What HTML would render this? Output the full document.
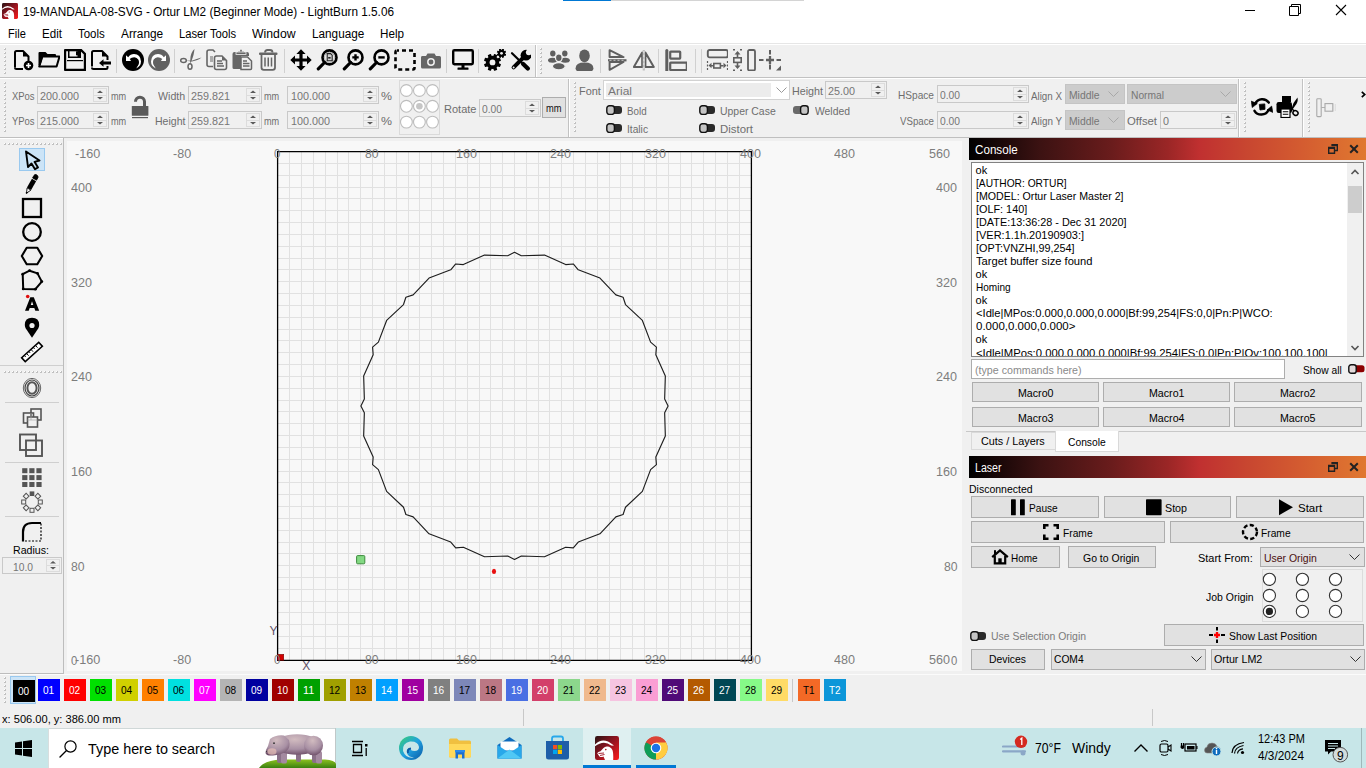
<!DOCTYPE html>
<html><head><meta charset="utf-8"><title>LightBurn</title><style>
*{margin:0;padding:0;box-sizing:border-box}
html,body{width:1366px;height:768px;overflow:hidden}
body{position:relative;background:#f0f0f0;font-family:"Liberation Sans",sans-serif;font-size:12px;color:#000}
.a{position:absolute;display:block}
.t{position:absolute;white-space:pre;line-height:1;transform-origin:0 0}
</style></head><body>
<div class="a" style="left:0px;top:0px;width:1366px;height:22px;background:#fff;"></div>
<div class="a" style="left:0px;top:22px;width:1366px;height:21px;background:#fff;"></div>
<div class="a" style="left:0px;top:43px;width:1366px;height:1px;background:#e6e6e6;"></div>
<div class="a" style="left:0px;top:44px;width:1366px;height:1px;background:#fff;"></div>
<div class="a" style="left:0px;top:45px;width:1366px;height:32px;background:#f0f0f0;"></div>
<div class="a" style="left:0px;top:77px;width:1366px;height:1px;background:#c2c2c2;"></div>
<div class="a" style="left:0px;top:78px;width:1366px;height:1px;background:#fff;"></div>
<div class="a" style="left:0px;top:79px;width:1366px;height:58px;background:#f0f0f0;"></div>
<div class="a" style="left:0px;top:137px;width:1366px;height:1px;background:#bfbfbf;"></div>
<div class="a" style="left:0px;top:138px;width:63px;height:1px;background:#fff;"></div>
<div class="a" style="left:67px;top:141px;width:895px;height:530px;background:#f8f8f8;"></div>
<div class="a" style="left:63px;top:138px;width:1px;height:536px;background:#bdbdbd;"></div>
<div class="a" style="left:0px;top:673px;width:64px;height:1px;background:#bdbdbd;"></div>
<div class="a" style="left:0px;top:674px;width:1366px;height:1px;background:#fbfbfb;"></div>
<div class="a" style="left:0px;top:728px;width:1366px;height:40px;background:#c7e6e8;"></div>
<svg class="a" style="left:2px;top:3px;" width="16" height="16" viewBox="0 0 24 24"><defs><linearGradient id="lg1" x1="0" y1="0" x2="1" y2="1"><stop offset="0" stop-color="#2a1414"/><stop offset="0.45" stop-color="#8a1420"/><stop offset="1" stop-color="#ff1a1a"/></linearGradient></defs>
<rect x="0" y="0" width="24" height="24" rx="2.2" fill="url(#lg1)"/>
<path d="M0 8.5 Q8 0.5 18 8.8 L18.8 9.8 L16.2 9.6 Q9 3.5 0 10.2 Z" fill="#fff"/>
<path d="M10 24 L8.5 20.5 Q6 21.5 4.5 20.5 L2.2 17.2 Q3 15.8 5.5 15.2 L8.5 12 Q10 10.2 12.5 10.5 Q16 10.8 17.6 14.5 Q18.5 17.5 18.2 24 Z" fill="#fff"/>
<path d="M3.5 17.5 L9 17 M5 19.5 L9.5 18.5" stroke="#a01020" stroke-width="0.9"/><circle cx="10.8" cy="13.6" r="0.8" fill="#a01020"/></svg>
<div class="t" style="left:23.00px;top:5.84px;font-size:12px;color:#000;transform:scaleX(0.9810);">19-MANDALA-08-SVG - Ortur LM2 (Beginner Mode) - LightBurn 1.5.06</div>
<div class="a" style="left:563px;top:0px;width:48px;height:1px;background:#0078d4;"></div>
<div class="a" style="left:611px;top:0px;width:193px;height:1px;background:#d4d4d4;"></div>
<div class="a" style="left:1245px;top:10px;width:10px;height:1px;background:#000;"></div>
<svg class="a" style="left:1289px;top:4px;" width="12" height="12" viewBox="0 0 12 12"><path d="M0.5 2.5 H9.5 V11.5 H0.5 Z M2.5 2.5 V0.5 H11.5 V9.5 H9.5" fill="none" stroke="#000" stroke-width="1"/></svg>
<svg class="a" style="left:1335px;top:4px;" width="12" height="12" viewBox="0 0 12 12"><path d="M1 1 L11 11 M11 1 L1 11" stroke="#000" stroke-width="1.1"/></svg>
<div class="t" style="left:8.30px;top:28.24px;font-size:12px;color:#000;transform:scaleX(0.9202);">File</div>
<div class="t" style="left:41.50px;top:28.24px;font-size:12px;color:#000;transform:scaleX(0.9668);">Edit</div>
<div class="t" style="left:77.80px;top:28.24px;font-size:12px;color:#000;transform:scaleX(0.9566);">Tools</div>
<div class="t" style="left:120.80px;top:28.24px;font-size:12px;color:#000;transform:scaleX(0.9882);">Arrange</div>
<div class="t" style="left:179.00px;top:28.24px;font-size:12px;color:#000;transform:scaleX(0.9353);">Laser Tools</div>
<div class="t" style="left:252.20px;top:28.24px;font-size:12px;color:#000;transform:scaleX(1.0214);">Window</div>
<div class="t" style="left:312.10px;top:28.24px;font-size:12px;color:#000;transform:scaleX(0.9796);">Language</div>
<div class="t" style="left:380.40px;top:28.24px;font-size:12px;color:#000;transform:scaleX(0.9722);">Help</div>
<svg class="a" style="left:4px;top:48px;" width="2" height="26" viewBox="0 0 2 26"><rect x="0" y="0" width="2" height="2" fill="#c0c0c0"/><rect x="0" y="0" width="1" height="1" fill="#fff"/><rect x="0" y="4" width="2" height="2" fill="#c0c0c0"/><rect x="0" y="4" width="1" height="1" fill="#fff"/><rect x="0" y="8" width="2" height="2" fill="#c0c0c0"/><rect x="0" y="8" width="1" height="1" fill="#fff"/><rect x="0" y="12" width="2" height="2" fill="#c0c0c0"/><rect x="0" y="12" width="1" height="1" fill="#fff"/><rect x="0" y="16" width="2" height="2" fill="#c0c0c0"/><rect x="0" y="16" width="1" height="1" fill="#fff"/><rect x="0" y="20" width="2" height="2" fill="#c0c0c0"/><rect x="0" y="20" width="1" height="1" fill="#fff"/><rect x="0" y="24" width="2" height="2" fill="#c0c0c0"/><rect x="0" y="24" width="1" height="1" fill="#fff"/></svg>
<svg class="a" style="left:12px;top:49px;" width="22" height="22" viewBox="0 0 22 22"><path d="M3 18.5 V3.5 Q3 2 4.5 2 H11 L16.5 7.5 V12" fill="none" stroke="#000" stroke-width="2" stroke-linejoin="round"/>
<path d="M11 2 V7.5 H16.5 Z" fill="#000"/><path d="M3 18.5 Q3 20 4.5 20 H11" fill="none" stroke="#000" stroke-width="2"/>
<circle cx="16.5" cy="16.5" r="4.8" fill="#000"/><path d="M16.5 14 V19 M14 16.5 H19" stroke="#fff" stroke-width="1.6"/></svg>
<svg class="a" style="left:38px;top:49px;" width="22" height="22" viewBox="0 0 22 22"><path d="M0.5 4 Q0.5 3 1.5 3 H7.5 L9.5 5 H17 Q18 5 18 6 V7.5 H5 L2.5 16 H0.5 Z" fill="#000"/>
<path d="M4.3 7.6 H21.5 L18.6 17.5 H1.2 Z" fill="none" stroke="#000" stroke-width="2" stroke-linejoin="round"/></svg>
<svg class="a" style="left:64px;top:49px;" width="22" height="22" viewBox="0 0 22 22"><path d="M1 2 Q1 1 2 1 H17 L21 5 V21 H2 Q1 21 1 20 Z" fill="none" stroke="#000" stroke-width="2.4" stroke-linejoin="round"/>
<rect x="4" y="2" width="13" height="7" fill="#000"/><rect x="5.5" y="2.3" width="8" height="5.2" fill="#f0f0f0"/><rect x="12" y="2.3" width="2" height="4" fill="#000"/>
<rect x="3" y="11" width="16" height="1.2" fill="#000"/></svg>
<svg class="a" style="left:90px;top:49px;" width="22" height="22" viewBox="0 0 22 22"><path d="M2 17.5 V3.5 Q2 2 3.5 2 H12 L17.5 7.5 V11 M17.5 17 V18.5 Q17.5 20 16 20 H3.5 Q2 20 2 18.5" fill="none" stroke="#000" stroke-width="2" stroke-linejoin="round"/>
<path d="M12 2 V7.5 H17.5 Z" fill="#000"/><path d="M9 14 L13.5 10.2 V12.5 H21 V15.5 H13.5 V17.8 Z" fill="#000"/></svg>
<div class="a" style="left:116px;top:49px;width:1px;height:24px;background:#d0d0d0;"></div>
<svg class="a" style="left:122px;top:49px;" width="22" height="22" viewBox="0 0 22 22"><circle cx="11" cy="11" r="11" fill="#000"/><path d="M4 6.2 L4 12.1 L9.6 12.1 L7.6 10.1 Q9.6 8.2 12.2 8.2 Q16.4 8.6 16.8 13 Q16.8 16.6 14.2 19.6 Q19 16.8 19 12.5 Q18.6 5.4 12 5 Q8.4 5 6.2 8.3 Z" fill="#fff"/><circle cx="12.6" cy="13.4" r="4.3" fill="#000"/></svg>
<svg class="a" style="left:148px;top:49px;" width="22" height="22" viewBox="0 0 22 22"><circle cx="11" cy="11" r="11" fill="#616161"/><g transform="translate(22 0) scale(-1 1)"><path d="M4 6.2 L4 12.1 L9.6 12.1 L7.6 10.1 Q9.6 8.2 12.2 8.2 Q16.4 8.6 16.8 13 Q16.8 16.6 14.2 19.6 Q19 16.8 19 12.5 Q18.6 5.4 12 5 Q8.4 5 6.2 8.3 Z" fill="#fff"/><circle cx="12.6" cy="13.4" r="4.3" fill="#616161"/></g></svg>
<div class="a" style="left:174px;top:49px;width:1px;height:24px;background:#d0d0d0;"></div>
<svg class="a" style="left:180px;top:49px;" width="22" height="22" viewBox="0 0 22 22"><ellipse cx="3.5" cy="11.5" rx="2.8" ry="2" fill="none" stroke="#666" stroke-width="1.5"/><ellipse cx="10" cy="17.5" rx="2" ry="2.8" fill="none" stroke="#666" stroke-width="1.5"/>
<path d="M6 11.8 L12.5 11.5 C15 10.5 18 9.5 21.5 8.5 C19 11 16 11.5 12 12.5 Z" fill="#666"/><path d="M10 14.8 L10.5 8 C11 5 12 2 14.5 0 C14 4 13.5 7 11.5 12 Z" fill="#666"/></svg>
<svg class="a" style="left:206px;top:49px;" width="22" height="22" viewBox="0 0 22 22"><path d="M7 17.5 H3 Q1 17.5 1 15.5 V3 Q1 1 3 1 H7 L9 3" fill="none" stroke="#666" stroke-width="1.6"/><path d="M4 8 H7 M4 10 H7 M4 12 H7" stroke="#666" stroke-width="1.2"/>
<path d="M8.5 9 Q8.5 7 10.5 7 H16 L20.5 11.5 V18.5 Q20.5 20.5 18.5 20.5 H10.5 Q8.5 20.5 8.5 18.5 Z" fill="#f0f0f0" stroke="#666" stroke-width="1.6"/><path d="M16 7 V11.5 H20.5 Z" fill="#666"/><path d="M11 12 H16 M11 14.5 H17 M11 17 H18" stroke="#666" stroke-width="1.3"/></svg>
<svg class="a" style="left:232px;top:49px;" width="22" height="22" viewBox="0 0 22 22"><path d="M2 20 Q0.5 20 0.5 18.5 V5 Q0.5 3 2.5 3 H15 Q17 3 17 5 V7 H9 V20 Z" fill="#666"/><path d="M6 4 V2.5 H8 Q8 0.5 9 0.5 Q10 0.5 10 2.5 H12 V4 Z" fill="#666"/><rect x="4" y="3" width="10" height="2.5" fill="#666" stroke="#f0f0f0" stroke-width="0.8"/>
<path d="M9 8 H15.5 L19.5 12 V19.5 Q19.5 20.5 18.5 20.5 H9 Z" fill="#f0f0f0" stroke="#666" stroke-width="1.5"/><path d="M11 12 H15 M11 14.5 H17.5 M11 17 H17.5" stroke="#666" stroke-width="1.3"/></svg>
<svg class="a" style="left:259px;top:49px;" width="22" height="22" viewBox="0 0 22 22"><path d="M6 3.5 Q6 1 8.5 1 H11 Q13.5 1 13.5 3.5" fill="none" stroke="#666" stroke-width="1.8"/><rect x="0" y="3.5" width="18.5" height="2.5" rx="1" fill="#666"/>
<path d="M2.5 6 V18.5 Q2.5 20.8 4.8 20.8 H13.7 Q16 20.8 16 18.5 V6" fill="none" stroke="#666" stroke-width="1.8"/><path d="M6 8.5 V17.5 M9.25 8.5 V17.5 M12.5 8.5 V17.5" stroke="#666" stroke-width="1.5"/></svg>
<div class="a" style="left:284px;top:49px;width:1px;height:24px;background:#d0d0d0;"></div>
<svg class="a" style="left:290px;top:49px;" width="22" height="22" viewBox="0 0 22 22"><path d="M11 0.3 L15.6 5 H12.6 V9.4 H17 V6.4 L21.7 11 L17 15.6 V12.6 H12.6 V17 H15.6 L11 21.7 L6.4 17 H9.4 V12.6 H5 V15.6 L0.3 11 L5 6.4 V9.4 H9.4 V5 H6.4 Z" fill="#000"/></svg>
<svg class="a" style="left:316px;top:49px;" width="22" height="22" viewBox="0 0 22 22"><circle cx="13.5" cy="8.4" r="7" fill="none" stroke="#000" stroke-width="2.6"/><path d="M8.5 13.5 L2.3 19.8" stroke="#000" stroke-width="3.2" stroke-linecap="round"/><circle cx="13.5" cy="8.4" r="5" fill="none" stroke="#999" stroke-width="0.7"/><path d="M11.2 4.6 H14.6 L16.2 6.2 V11.8 H11.2 Z" fill="#d0d0d0" stroke="#222" stroke-width="1.1"/><rect x="12.2" y="8" width="2.4" height="1.6" fill="#222"/></svg>
<svg class="a" style="left:342px;top:49px;" width="22" height="22" viewBox="0 0 22 22"><circle cx="13.5" cy="8.4" r="7" fill="none" stroke="#000" stroke-width="2.6"/><path d="M8.5 13.5 L2.3 19.8" stroke="#000" stroke-width="3.2" stroke-linecap="round"/><path d="M13.5 5.2 V11.6 M10.3 8.4 H16.7" stroke="#000" stroke-width="2.4"/></svg>
<svg class="a" style="left:368px;top:49px;" width="22" height="22" viewBox="0 0 22 22"><circle cx="13.5" cy="8.4" r="7" fill="none" stroke="#000" stroke-width="2.6"/><path d="M8.5 13.5 L2.3 19.8" stroke="#000" stroke-width="3.2" stroke-linecap="round"/><path d="M10.3 8.4 H16.7" stroke="#000" stroke-width="2.4"/></svg>
<svg class="a" style="left:394px;top:49px;" width="22" height="22" viewBox="0 0 22 22"><rect x="1.5" y="1.5" width="19" height="19" rx="1.5" fill="none" stroke="#000" stroke-width="2.6" stroke-dasharray="4 3" stroke-dashoffset="2"/></svg>
<svg class="a" style="left:420px;top:49px;" width="22" height="22" viewBox="0 0 22 22"><path d="M2 7 Q1 7 1 8.5 V18 Q1 19.5 2.5 19.5 H19.5 Q21 19.5 21 18 V8.5 Q21 7 19.5 7 H16 L14.5 4.5 H7.5 L6 7 Z" fill="#666"/><circle cx="11" cy="13" r="3.2" fill="none" stroke="#f0f0f0" stroke-width="1.5"/></svg>
<div class="a" style="left:446px;top:49px;width:1px;height:24px;background:#d0d0d0;"></div>
<svg class="a" style="left:452px;top:49px;" width="22" height="22" viewBox="0 0 22 22"><rect x="1.2" y="1.2" width="19.6" height="14" rx="1.2" fill="none" stroke="#000" stroke-width="2.4"/><rect x="9.5" y="15" width="3" height="4" fill="#000"/><rect x="5.5" y="18.5" width="11" height="2.3" rx="0.5" fill="#000"/></svg>
<div class="a" style="left:478px;top:49px;width:1px;height:24px;background:#d0d0d0;"></div>
<svg class="a" style="left:484px;top:49px;" width="22" height="22" viewBox="0 0 22 22"><g fill="#000"><circle cx="8.5" cy="13.4" r="6.6"/><g transform="translate(8.5 13.4)"><rect x="-1.7" y="-8.6" width="3.4" height="4" rx="0.6" transform="rotate(22.5)"/><rect x="-1.7" y="-8.6" width="3.4" height="4" rx="0.6" transform="rotate(67.5)"/><rect x="-1.7" y="-8.6" width="3.4" height="4" rx="0.6" transform="rotate(112.5)"/><rect x="-1.7" y="-8.6" width="3.4" height="4" rx="0.6" transform="rotate(157.5)"/><rect x="-1.7" y="-8.6" width="3.4" height="4" rx="0.6" transform="rotate(202.5)"/><rect x="-1.7" y="-8.6" width="3.4" height="4" rx="0.6" transform="rotate(247.5)"/><rect x="-1.7" y="-8.6" width="3.4" height="4" rx="0.6" transform="rotate(292.5)"/><rect x="-1.7" y="-8.6" width="3.4" height="4" rx="0.6" transform="rotate(337.5)"/></g><circle cx="8.5" cy="13.4" r="2.9" fill="#f0f0f0"/>
<circle cx="17.5" cy="4.3" r="3.5"/><g transform="translate(17.5 4.3)"><rect x="-1" y="-4.7" width="2" height="2.4" rx="0.3" transform="rotate(22.5)"/><rect x="-1" y="-4.7" width="2" height="2.4" rx="0.3" transform="rotate(67.5)"/><rect x="-1" y="-4.7" width="2" height="2.4" rx="0.3" transform="rotate(112.5)"/><rect x="-1" y="-4.7" width="2" height="2.4" rx="0.3" transform="rotate(157.5)"/><rect x="-1" y="-4.7" width="2" height="2.4" rx="0.3" transform="rotate(202.5)"/><rect x="-1" y="-4.7" width="2" height="2.4" rx="0.3" transform="rotate(247.5)"/><rect x="-1" y="-4.7" width="2" height="2.4" rx="0.3" transform="rotate(292.5)"/><rect x="-1" y="-4.7" width="2" height="2.4" rx="0.3" transform="rotate(337.5)"/></g><circle cx="17.5" cy="4.3" r="1.4" fill="#f0f0f0"/></g></svg>
<svg class="a" style="left:509px;top:49px;" width="22" height="22" viewBox="0 0 22 22"><path d="M3 4.2 L12.5 13.5" stroke="#000" stroke-width="2.2" stroke-linecap="round"/><path d="M14.2 15 L18.8 19.6" stroke="#000" stroke-width="4.2" stroke-linecap="round"/>
<path d="M4.6 18.4 L14.5 8.5" stroke="#000" stroke-width="4" stroke-linecap="round"/><circle cx="17" cy="6.2" r="5.4" fill="#000"/><circle cx="19.8" cy="3.3" r="2.9" fill="#f0f0f0"/><circle cx="4.6" cy="18.4" r="1" fill="#f0f0f0"/></svg>
<div class="a" style="left:535px;top:45px;width:1px;height:32px;background:#c2c2c2;"></div>
<div class="a" style="left:536px;top:45px;width:1px;height:32px;background:#fff;"></div>
<svg class="a" style="left:540px;top:48px;" width="2" height="26" viewBox="0 0 2 26"><rect x="0" y="0" width="2" height="2" fill="#c0c0c0"/><rect x="0" y="0" width="1" height="1" fill="#fff"/><rect x="0" y="4" width="2" height="2" fill="#c0c0c0"/><rect x="0" y="4" width="1" height="1" fill="#fff"/><rect x="0" y="8" width="2" height="2" fill="#c0c0c0"/><rect x="0" y="8" width="1" height="1" fill="#fff"/><rect x="0" y="12" width="2" height="2" fill="#c0c0c0"/><rect x="0" y="12" width="1" height="1" fill="#fff"/><rect x="0" y="16" width="2" height="2" fill="#c0c0c0"/><rect x="0" y="16" width="1" height="1" fill="#fff"/><rect x="0" y="20" width="2" height="2" fill="#c0c0c0"/><rect x="0" y="20" width="1" height="1" fill="#fff"/><rect x="0" y="24" width="2" height="2" fill="#c0c0c0"/><rect x="0" y="24" width="1" height="1" fill="#fff"/></svg>
<svg class="a" style="left:548px;top:49px;" width="22" height="22" viewBox="0 0 22 22"><g fill="#5f5f5f"><ellipse cx="4.8" cy="4.6" rx="2.7" ry="3"/><ellipse cx="4.6" cy="11.3" rx="4.6" ry="2.5"/><ellipse cx="16.8" cy="4.6" rx="2.7" ry="3"/><ellipse cx="17.2" cy="11.3" rx="4.6" ry="2.5"/><ellipse cx="10.8" cy="8.8" rx="3.3" ry="3.9" stroke="#f0f0f0" stroke-width="1.2"/><ellipse cx="10.8" cy="17.3" rx="6.4" ry="3.6" stroke="#f0f0f0" stroke-width="1.2"/></g></svg>
<svg class="a" style="left:574px;top:49px;" width="22" height="22" viewBox="0 0 22 22"><g fill="#5f5f5f"><ellipse cx="10.5" cy="6.8" rx="5.3" ry="6.4"/><path d="M1.6 19.2 Q1.6 13.4 10.5 13.4 Q19.4 13.4 19.4 19.2 Q19.4 22.3 16.5 22.3 H4.5 Q1.6 22.3 1.6 19.2 Z"/></g></svg>
<div class="a" style="left:600px;top:49px;width:1px;height:24px;background:#d0d0d0;"></div>
<svg class="a" style="left:607px;top:49px;" width="22" height="22" viewBox="0 0 22 22"><path d="M2.6 1.2 L16.5 8.1 H2.6 Z M2.6 13 H16.5 L2.6 20.8 Z" fill="none" stroke="#5f5f5f" stroke-width="2" stroke-linejoin="round"/><rect x="1" y="10.2" width="18.5" height="2.2" fill="#5f5f5f"/><path d="M2.5 11.3 H18.5" stroke="#c8c8c8" stroke-width="1" stroke-dasharray="2 2"/></svg>
<svg class="a" style="left:633px;top:49px;" width="22" height="22" viewBox="0 0 22 22"><path d="M9.2 3.4 L0.8 18 H9.2 Z M12.4 3.4 L20.8 18 H12.4 Z" fill="none" stroke="#5f5f5f" stroke-width="2" stroke-linejoin="round"/><rect x="9.7" y="1" width="2.2" height="20.5" fill="#c0c0c0"/><path d="M10.8 2 V21" stroke="#e0e0e0" stroke-width="1" stroke-dasharray="2 2"/></svg>
<div class="a" style="left:658px;top:49px;width:1px;height:24px;background:#d0d0d0;"></div>
<svg class="a" style="left:665px;top:49px;" width="22" height="22" viewBox="0 0 22 22"><rect x="0.3" y="0" width="3" height="23" rx="1.5" fill="#5f5f5f"/><rect x="5.2" y="2.6" width="10" height="7" rx="0.5" fill="none" stroke="#5f5f5f" stroke-width="2.2"/><rect x="5.2" y="13.6" width="16.6" height="7.5" rx="0.5" fill="none" stroke="#5f5f5f" stroke-width="2.2"/></svg>
<div class="a" style="left:695px;top:49px;width:1px;height:24px;background:#d0d0d0;"></div>
<div class="a" style="left:701px;top:49px;width:1px;height:24px;background:#d0d0d0;"></div>
<svg class="a" style="left:706px;top:49px;" width="22" height="22" viewBox="0 0 22 22"><rect x="1.8" y="1" width="20" height="7.4" rx="1.8" fill="none" stroke="#5f5f5f" stroke-width="1.9"/><path d="M1.5 12 V14 M1.5 15.5 V17.5 M1.5 19 V21 M21.5 12 V14 M21.5 15.5 V17.5 M21.5 19 V21" stroke="#5f5f5f" stroke-width="1.2"/><path d="M2.5 16.5 L5.5 13.8 V19.2 Z M20.5 16.5 L17.5 13.8 V19.2 Z" fill="#5f5f5f"/><rect x="7.8" y="14.5" width="6.6" height="4.5" fill="#f0f0f0" stroke="#5f5f5f" stroke-width="1.6"/><path d="M5 16.7 H7.8 M14.4 16.7 H17.5" stroke="#5f5f5f" stroke-width="1.6"/></svg>
<svg class="a" style="left:733px;top:49px;" width="9" height="22" viewBox="0 0 9 22"><path d="M0 0.8 H2 M7 0.8 H9 M0 21.2 H2 M7 21.2 H9" stroke="#5f5f5f" stroke-width="1.4"/><path d="M4.5 2 L1.5 5.5 H7.5 Z M4.5 20 L1.5 16.5 H7.5 Z" fill="#5f5f5f"/><path d="M4.5 5 V9 M4.5 13 V17" stroke="#5f5f5f" stroke-width="1.6"/><rect x="0.8" y="8.8" width="7.4" height="4.6" fill="#f0f0f0" stroke="#5f5f5f" stroke-width="1.6"/></svg>
<svg class="a" style="left:747px;top:49px;" width="9" height="22" viewBox="0 0 9 22"><rect x="1" y="1" width="7" height="20.5" rx="1.5" fill="none" stroke="#5f5f5f" stroke-width="1.8"/></svg>
<svg class="a" style="left:759px;top:49px;" width="22" height="22" viewBox="0 0 22 22"><path d="M11 1 V5.5 M11 15.5 V20.5 M0 11 H4.5 M17.5 11 H22" stroke="#5f5f5f" stroke-width="2"/><path d="M11 7 V15 M7 11 H15" stroke="#5f5f5f" stroke-width="2.3"/><path d="M22 16.5 V21.5 H17 Z" fill="#5f5f5f"/></svg>
<svg class="a" style="left:4px;top:82px;" width="2" height="52" viewBox="0 0 2 52"><rect x="0" y="0" width="2" height="2" fill="#c0c0c0"/><rect x="0" y="0" width="1" height="1" fill="#fff"/><rect x="0" y="4" width="2" height="2" fill="#c0c0c0"/><rect x="0" y="4" width="1" height="1" fill="#fff"/><rect x="0" y="8" width="2" height="2" fill="#c0c0c0"/><rect x="0" y="8" width="1" height="1" fill="#fff"/><rect x="0" y="12" width="2" height="2" fill="#c0c0c0"/><rect x="0" y="12" width="1" height="1" fill="#fff"/><rect x="0" y="16" width="2" height="2" fill="#c0c0c0"/><rect x="0" y="16" width="1" height="1" fill="#fff"/><rect x="0" y="20" width="2" height="2" fill="#c0c0c0"/><rect x="0" y="20" width="1" height="1" fill="#fff"/><rect x="0" y="24" width="2" height="2" fill="#c0c0c0"/><rect x="0" y="24" width="1" height="1" fill="#fff"/><rect x="0" y="28" width="2" height="2" fill="#c0c0c0"/><rect x="0" y="28" width="1" height="1" fill="#fff"/><rect x="0" y="32" width="2" height="2" fill="#c0c0c0"/><rect x="0" y="32" width="1" height="1" fill="#fff"/><rect x="0" y="36" width="2" height="2" fill="#c0c0c0"/><rect x="0" y="36" width="1" height="1" fill="#fff"/><rect x="0" y="40" width="2" height="2" fill="#c0c0c0"/><rect x="0" y="40" width="1" height="1" fill="#fff"/><rect x="0" y="44" width="2" height="2" fill="#c0c0c0"/><rect x="0" y="44" width="1" height="1" fill="#fff"/><rect x="0" y="48" width="2" height="2" fill="#c0c0c0"/><rect x="0" y="48" width="1" height="1" fill="#fff"/></svg>
<div class="t" style="left:11.70px;top:90.87px;font-size:11.5px;color:#6e6e6e;transform:scaleX(0.8218);">XPos</div>
<div class="a" style="left:37px;top:86px;width:72px;height:18px;background:#f0f0f0;border:1px solid #c9c9c9;"></div>
<div class="a" style="left:93px;top:88px;width:14px;height:14px;border:1px solid #dcdcdc;"></div>
<div class="a" style="left:93px;top:95px;width:14px;height:1px;background:#dcdcdc;"></div>
<svg class="a" style="left:96px;top:88px;" width="8" height="14" viewBox="0 0 8 14"><path d="M1 5.0 L4 2.5 L7 5.0 Z M1 9.0 L4 11.5 L7 9.0 Z" fill="#5a5a5a"/></svg>
<div class="t" style="left:40.00px;top:90.87px;font-size:11.5px;color:#767676;transform:scaleX(0.9380);">200.000</div>
<div class="t" style="left:111.00px;top:91.07px;font-size:11.5px;color:#6e6e6e;transform:scaleX(0.7928);">mm</div>
<div class="t" style="left:11.70px;top:116.17px;font-size:11.5px;color:#6e6e6e;transform:scaleX(0.8218);">YPos</div>
<div class="a" style="left:37px;top:111px;width:72px;height:18px;background:#f0f0f0;border:1px solid #c9c9c9;"></div>
<div class="a" style="left:93px;top:113px;width:14px;height:14px;border:1px solid #dcdcdc;"></div>
<div class="a" style="left:93px;top:120px;width:14px;height:1px;background:#dcdcdc;"></div>
<svg class="a" style="left:96px;top:113px;" width="8" height="14" viewBox="0 0 8 14"><path d="M1 5.0 L4 2.5 L7 5.0 Z M1 9.0 L4 11.5 L7 9.0 Z" fill="#5a5a5a"/></svg>
<div class="t" style="left:40.00px;top:116.17px;font-size:11.5px;color:#767676;transform:scaleX(0.9380);">215.000</div>
<div class="t" style="left:111.00px;top:116.27px;font-size:11.5px;color:#6e6e6e;transform:scaleX(0.7928);">mm</div>
<svg class="a" style="left:131px;top:95px;" width="18" height="24" viewBox="0 0 18 24"><path d="M4.5 6.8 A4.5 4.5 0 0 1 13.5 6.5 V11.5" fill="none" stroke="#5a5a5a" stroke-width="3"/><rect x="0.8" y="11" width="16.6" height="9.8" rx="0.6" fill="#5a5a5a"/><rect x="1" y="22" width="16" height="1.2" fill="#5a5a5a"/></svg>
<div class="t" style="left:157.60px;top:91.07px;font-size:11.5px;color:#6e6e6e;transform:scaleX(0.9250);">Width</div>
<div class="a" style="left:188px;top:86px;width:74px;height:18px;background:#f0f0f0;border:1px solid #c9c9c9;"></div>
<div class="a" style="left:246px;top:88px;width:14px;height:14px;border:1px solid #dcdcdc;"></div>
<div class="a" style="left:246px;top:95px;width:14px;height:1px;background:#dcdcdc;"></div>
<svg class="a" style="left:249px;top:88px;" width="8" height="14" viewBox="0 0 8 14"><path d="M1 5.0 L4 2.5 L7 5.0 Z M1 9.0 L4 11.5 L7 9.0 Z" fill="#5a5a5a"/></svg>
<div class="t" style="left:191.00px;top:90.87px;font-size:11.5px;color:#767676;transform:scaleX(0.9380);">259.821</div>
<div class="t" style="left:263.50px;top:91.07px;font-size:11.5px;color:#6e6e6e;transform:scaleX(0.7928);">mm</div>
<div class="t" style="left:154.50px;top:116.17px;font-size:11.5px;color:#6e6e6e;transform:scaleX(0.9173);">Height</div>
<div class="a" style="left:188px;top:111px;width:74px;height:18px;background:#f0f0f0;border:1px solid #c9c9c9;"></div>
<div class="a" style="left:246px;top:113px;width:14px;height:14px;border:1px solid #dcdcdc;"></div>
<div class="a" style="left:246px;top:120px;width:14px;height:1px;background:#dcdcdc;"></div>
<svg class="a" style="left:249px;top:113px;" width="8" height="14" viewBox="0 0 8 14"><path d="M1 5.0 L4 2.5 L7 5.0 Z M1 9.0 L4 11.5 L7 9.0 Z" fill="#5a5a5a"/></svg>
<div class="t" style="left:191.00px;top:116.17px;font-size:11.5px;color:#767676;transform:scaleX(0.9380);">259.821</div>
<div class="t" style="left:263.50px;top:116.27px;font-size:11.5px;color:#6e6e6e;transform:scaleX(0.7928);">mm</div>
<div class="a" style="left:287px;top:86px;width:92px;height:18px;background:#f0f0f0;border:1px solid #c9c9c9;"></div>
<div class="a" style="left:363px;top:88px;width:14px;height:14px;border:1px solid #dcdcdc;"></div>
<div class="a" style="left:363px;top:95px;width:14px;height:1px;background:#dcdcdc;"></div>
<svg class="a" style="left:366px;top:88px;" width="8" height="14" viewBox="0 0 8 14"><path d="M1 5.0 L4 2.5 L7 5.0 Z M1 9.0 L4 11.5 L7 9.0 Z" fill="#5a5a5a"/></svg>
<div class="t" style="left:290.50px;top:90.87px;font-size:11.5px;color:#767676;transform:scaleX(0.9380);">100.000</div>
<div class="t" style="left:381.00px;top:91.07px;font-size:11.5px;color:#6e6e6e;transform:scaleX(1.0748);">%</div>
<div class="a" style="left:287px;top:111px;width:92px;height:18px;background:#f0f0f0;border:1px solid #c9c9c9;"></div>
<div class="a" style="left:363px;top:113px;width:14px;height:14px;border:1px solid #dcdcdc;"></div>
<div class="a" style="left:363px;top:120px;width:14px;height:1px;background:#dcdcdc;"></div>
<svg class="a" style="left:366px;top:113px;" width="8" height="14" viewBox="0 0 8 14"><path d="M1 5.0 L4 2.5 L7 5.0 Z M1 9.0 L4 11.5 L7 9.0 Z" fill="#5a5a5a"/></svg>
<div class="t" style="left:290.50px;top:116.17px;font-size:11.5px;color:#767676;transform:scaleX(0.9380);">100.000</div>
<div class="t" style="left:381.00px;top:116.27px;font-size:11.5px;color:#6e6e6e;transform:scaleX(1.0748);">%</div>
<div class="a" style="left:399px;top:80px;width:41px;height:55px;border:1px solid #dadada;"></div>
<svg class="a" style="left:399px;top:80px;" width="41" height="55" viewBox="0 0 41 55"><circle cx="7.4" cy="10.5" r="5.9" fill="#fff" stroke="#bdbdbd" stroke-width="1.1"/><circle cx="20.4" cy="10.5" r="5.9" fill="#fff" stroke="#bdbdbd" stroke-width="1.1"/><circle cx="33.5" cy="10.5" r="5.9" fill="#fff" stroke="#bdbdbd" stroke-width="1.1"/><circle cx="7.4" cy="26.3" r="5.9" fill="#fff" stroke="#bdbdbd" stroke-width="1.1"/><circle cx="20.4" cy="26.3" r="5.9" fill="#fff" stroke="#bdbdbd" stroke-width="1.1"/><circle cx="33.5" cy="26.3" r="5.9" fill="#fff" stroke="#bdbdbd" stroke-width="1.1"/><circle cx="7.4" cy="42.1" r="5.9" fill="#fff" stroke="#bdbdbd" stroke-width="1.1"/><circle cx="20.4" cy="42.1" r="5.9" fill="#fff" stroke="#bdbdbd" stroke-width="1.1"/><circle cx="33.5" cy="42.1" r="5.9" fill="#fff" stroke="#bdbdbd" stroke-width="1.1"/><circle cx="20.4" cy="26.3" r="3.3" fill="#c6c6c6"/></svg>
<div class="t" style="left:443.50px;top:103.57px;font-size:11.5px;color:#6e6e6e;transform:scaleX(0.9590);">Rotate</div>
<div class="a" style="left:479px;top:99px;width:62px;height:18px;background:#f0f0f0;border:1px solid #c9c9c9;"></div>
<div class="a" style="left:525px;top:101px;width:14px;height:14px;border:1px solid #dcdcdc;"></div>
<div class="a" style="left:525px;top:108px;width:14px;height:1px;background:#dcdcdc;"></div>
<svg class="a" style="left:528px;top:101px;" width="8" height="14" viewBox="0 0 8 14"><path d="M1 5.0 L4 2.5 L7 5.0 Z M1 9.0 L4 11.5 L7 9.0 Z" fill="#5a5a5a"/></svg>
<div class="t" style="left:482.00px;top:103.87px;font-size:11.5px;color:#767676;transform:scaleX(0.8932);">0.00</div>
<div class="a" style="left:542px;top:97px;width:24px;height:21px;background:#e1e1e1;border:1px solid #adadad;"></div>
<div class="t" style="left:545.50px;top:103.37px;font-size:11.5px;color:#111;transform:scaleX(0.8085);">mm</div>
<div class="a" style="left:568px;top:79px;width:1px;height:58px;background:#c2c2c2;"></div>
<div class="a" style="left:569px;top:79px;width:1px;height:58px;background:#fff;"></div>
<svg class="a" style="left:574px;top:82px;" width="2" height="52" viewBox="0 0 2 52"><rect x="0" y="0" width="2" height="2" fill="#c0c0c0"/><rect x="0" y="0" width="1" height="1" fill="#fff"/><rect x="0" y="4" width="2" height="2" fill="#c0c0c0"/><rect x="0" y="4" width="1" height="1" fill="#fff"/><rect x="0" y="8" width="2" height="2" fill="#c0c0c0"/><rect x="0" y="8" width="1" height="1" fill="#fff"/><rect x="0" y="12" width="2" height="2" fill="#c0c0c0"/><rect x="0" y="12" width="1" height="1" fill="#fff"/><rect x="0" y="16" width="2" height="2" fill="#c0c0c0"/><rect x="0" y="16" width="1" height="1" fill="#fff"/><rect x="0" y="20" width="2" height="2" fill="#c0c0c0"/><rect x="0" y="20" width="1" height="1" fill="#fff"/><rect x="0" y="24" width="2" height="2" fill="#c0c0c0"/><rect x="0" y="24" width="1" height="1" fill="#fff"/><rect x="0" y="28" width="2" height="2" fill="#c0c0c0"/><rect x="0" y="28" width="1" height="1" fill="#fff"/><rect x="0" y="32" width="2" height="2" fill="#c0c0c0"/><rect x="0" y="32" width="1" height="1" fill="#fff"/><rect x="0" y="36" width="2" height="2" fill="#c0c0c0"/><rect x="0" y="36" width="1" height="1" fill="#fff"/><rect x="0" y="40" width="2" height="2" fill="#c0c0c0"/><rect x="0" y="40" width="1" height="1" fill="#fff"/><rect x="0" y="44" width="2" height="2" fill="#c0c0c0"/><rect x="0" y="44" width="1" height="1" fill="#fff"/><rect x="0" y="48" width="2" height="2" fill="#c0c0c0"/><rect x="0" y="48" width="1" height="1" fill="#fff"/></svg>
<div class="t" style="left:578.80px;top:85.87px;font-size:11.5px;color:#6e6e6e;transform:scaleX(0.9515);">Font</div>
<div class="a" style="left:603px;top:80px;width:187px;height:20px;background:#fff;border:1px solid #d2d2d2;"></div>
<div class="a" style="left:606px;top:83px;width:165px;height:14px;background:#ececec;"></div>
<svg class="a" style="left:776px;top:87px;" width="11" height="6" viewBox="0 0 11 6"><path d="M0.5 0.5 L5.5 5.5 L10.5 0.5" fill="none" stroke="#9a9a9a" stroke-width="1"/></svg>
<div class="t" style="left:608.00px;top:86.07px;font-size:11.5px;color:#767676;transform:scaleX(1.0428);">Arial</div>
<div class="t" style="left:791.50px;top:86.07px;font-size:11.5px;color:#6e6e6e;transform:scaleX(0.9323);">Height</div>
<div class="a" style="left:825px;top:81px;width:62px;height:18px;background:#f0f0f0;border:1px solid #c9c9c9;"></div>
<div class="a" style="left:871px;top:83px;width:14px;height:14px;border:1px solid #dcdcdc;"></div>
<div class="a" style="left:871px;top:90px;width:14px;height:1px;background:#dcdcdc;"></div>
<svg class="a" style="left:874px;top:83px;" width="8" height="14" viewBox="0 0 8 14"><path d="M1 5.0 L4 2.5 L7 5.0 Z M1 9.0 L4 11.5 L7 9.0 Z" fill="#5a5a5a"/></svg>
<div class="t" style="left:828.00px;top:85.87px;font-size:11.5px;color:#767676;transform:scaleX(0.9381);">25.00</div>
<svg class="a" style="left:606px;top:105px;" width="16" height="10" viewBox="0 0 16 10"><rect x="6" y="1" width="10" height="8" rx="3" fill="#2a2a2a"/><rect x="0.8" y="0.8" width="7.6" height="8.6" rx="2.6" fill="#c4c4c4" stroke="#111" stroke-width="1.4"/></svg>
<div class="t" style="left:627.40px;top:106.07px;font-size:11.5px;color:#6e6e6e;transform:scaleX(0.8510);">Bold</div>
<svg class="a" style="left:606px;top:123px;" width="16" height="10" viewBox="0 0 16 10"><rect x="6" y="1" width="10" height="8" rx="3" fill="#2a2a2a"/><rect x="0.8" y="0.8" width="7.6" height="8.6" rx="2.6" fill="#c4c4c4" stroke="#111" stroke-width="1.4"/></svg>
<div class="t" style="left:627.40px;top:123.87px;font-size:11.5px;color:#6e6e6e;transform:scaleX(0.8877);">Italic</div>
<svg class="a" style="left:699px;top:105px;" width="16" height="10" viewBox="0 0 16 10"><rect x="6" y="1" width="10" height="8" rx="3" fill="#2a2a2a"/><rect x="0.8" y="0.8" width="7.6" height="8.6" rx="2.6" fill="#c4c4c4" stroke="#111" stroke-width="1.4"/></svg>
<div class="t" style="left:720.00px;top:106.07px;font-size:11.5px;color:#6e6e6e;transform:scaleX(0.9075);">Upper Case</div>
<svg class="a" style="left:699px;top:123px;" width="16" height="10" viewBox="0 0 16 10"><rect x="6" y="1" width="10" height="8" rx="3" fill="#2a2a2a"/><rect x="0.8" y="0.8" width="7.6" height="8.6" rx="2.6" fill="#c4c4c4" stroke="#111" stroke-width="1.4"/></svg>
<div class="t" style="left:720.00px;top:123.87px;font-size:11.5px;color:#6e6e6e;transform:scaleX(0.9929);">Distort</div>
<svg class="a" style="left:793px;top:105px;" width="16" height="10" viewBox="0 0 16 10"><rect x="0" y="1" width="10" height="8" rx="3" fill="#6a6a6a"/><rect x="7.6" y="0.8" width="7.6" height="8.6" rx="2.6" fill="#c4c4c4" stroke="#111" stroke-width="1.4"/></svg>
<div class="t" style="left:815.00px;top:105.57px;font-size:11.5px;color:#6e6e6e;transform:scaleX(0.9021);">Welded</div>
<div class="t" style="left:898.00px;top:90.07px;font-size:11.5px;color:#6e6e6e;transform:scaleX(0.8797);">HSpace</div>
<div class="a" style="left:937px;top:85px;width:92px;height:18px;background:#f0f0f0;border:1px solid #c9c9c9;"></div>
<div class="a" style="left:1013px;top:87px;width:14px;height:14px;border:1px solid #dcdcdc;"></div>
<div class="a" style="left:1013px;top:94px;width:14px;height:1px;background:#dcdcdc;"></div>
<svg class="a" style="left:1016px;top:87px;" width="8" height="14" viewBox="0 0 8 14"><path d="M1 5.0 L4 2.5 L7 5.0 Z M1 9.0 L4 11.5 L7 9.0 Z" fill="#5a5a5a"/></svg>
<div class="t" style="left:940.00px;top:90.07px;font-size:11.5px;color:#767676;transform:scaleX(0.8932);">0.00</div>
<div class="t" style="left:900.00px;top:116.17px;font-size:11.5px;color:#6e6e6e;transform:scaleX(0.8441);">VSpace</div>
<div class="a" style="left:937px;top:111px;width:92px;height:18px;background:#f0f0f0;border:1px solid #c9c9c9;"></div>
<div class="a" style="left:1013px;top:113px;width:14px;height:14px;border:1px solid #dcdcdc;"></div>
<div class="a" style="left:1013px;top:120px;width:14px;height:1px;background:#dcdcdc;"></div>
<svg class="a" style="left:1016px;top:113px;" width="8" height="14" viewBox="0 0 8 14"><path d="M1 5.0 L4 2.5 L7 5.0 Z M1 9.0 L4 11.5 L7 9.0 Z" fill="#5a5a5a"/></svg>
<div class="t" style="left:940.00px;top:116.17px;font-size:11.5px;color:#767676;transform:scaleX(0.8932);">0.00</div>
<div class="t" style="left:1031.00px;top:90.57px;font-size:11.5px;color:#6e6e6e;transform:scaleX(0.8508);">Align X</div>
<div class="a" style="left:1065px;top:84px;width:60px;height:20px;background:#cccccc;border:1px solid #c4c4c4;"></div>
<svg class="a" style="left:1108px;top:91px;" width="11" height="6" viewBox="0 0 11 6"><path d="M0.5 0.5 L5.5 5.5 L10.5 0.5" fill="none" stroke="#a8a8a8" stroke-width="1"/></svg>
<div class="t" style="left:1068.50px;top:90.37px;font-size:11.5px;color:#767676;transform:scaleX(0.9000);">Middle</div>
<div class="t" style="left:1031.00px;top:116.17px;font-size:11.5px;color:#6e6e6e;transform:scaleX(0.8555);">Align Y</div>
<div class="a" style="left:1065px;top:110px;width:60px;height:20px;background:#cccccc;border:1px solid #c4c4c4;"></div>
<svg class="a" style="left:1108px;top:117px;" width="11" height="6" viewBox="0 0 11 6"><path d="M0.5 0.5 L5.5 5.5 L10.5 0.5" fill="none" stroke="#a8a8a8" stroke-width="1"/></svg>
<div class="t" style="left:1068.50px;top:116.17px;font-size:11.5px;color:#767676;transform:scaleX(0.9000);">Middle</div>
<div class="a" style="left:1127px;top:84px;width:110px;height:20px;background:#cccccc;border:1px solid #c4c4c4;"></div>
<svg class="a" style="left:1220px;top:91px;" width="11" height="6" viewBox="0 0 11 6"><path d="M0.5 0.5 L5.5 5.5 L10.5 0.5" fill="none" stroke="#a8a8a8" stroke-width="1"/></svg>
<div class="t" style="left:1130.50px;top:90.37px;font-size:11.5px;color:#767676;transform:scaleX(0.8904);">Normal</div>
<div class="t" style="left:1127.00px;top:116.17px;font-size:11.5px;color:#6e6e6e;transform:scaleX(0.9846);">Offset</div>
<div class="a" style="left:1160px;top:111px;width:77px;height:18px;background:#f0f0f0;border:1px solid #c9c9c9;"></div>
<div class="a" style="left:1221px;top:113px;width:14px;height:14px;border:1px solid #dcdcdc;"></div>
<div class="a" style="left:1221px;top:120px;width:14px;height:1px;background:#dcdcdc;"></div>
<svg class="a" style="left:1224px;top:113px;" width="8" height="14" viewBox="0 0 8 14"><path d="M1 5.0 L4 2.5 L7 5.0 Z M1 9.0 L4 11.5 L7 9.0 Z" fill="#5a5a5a"/></svg>
<div class="t" style="left:1163.00px;top:116.17px;font-size:11.5px;color:#767676;transform:scaleX(0.9366);">0</div>
<div class="a" style="left:1238px;top:79px;width:1px;height:58px;background:#c2c2c2;"></div>
<div class="a" style="left:1239px;top:79px;width:1px;height:58px;background:#fff;"></div>
<svg class="a" style="left:1244px;top:82px;" width="2" height="52" viewBox="0 0 2 52"><rect x="0" y="0" width="2" height="2" fill="#c0c0c0"/><rect x="0" y="0" width="1" height="1" fill="#fff"/><rect x="0" y="4" width="2" height="2" fill="#c0c0c0"/><rect x="0" y="4" width="1" height="1" fill="#fff"/><rect x="0" y="8" width="2" height="2" fill="#c0c0c0"/><rect x="0" y="8" width="1" height="1" fill="#fff"/><rect x="0" y="12" width="2" height="2" fill="#c0c0c0"/><rect x="0" y="12" width="1" height="1" fill="#fff"/><rect x="0" y="16" width="2" height="2" fill="#c0c0c0"/><rect x="0" y="16" width="1" height="1" fill="#fff"/><rect x="0" y="20" width="2" height="2" fill="#c0c0c0"/><rect x="0" y="20" width="1" height="1" fill="#fff"/><rect x="0" y="24" width="2" height="2" fill="#c0c0c0"/><rect x="0" y="24" width="1" height="1" fill="#fff"/><rect x="0" y="28" width="2" height="2" fill="#c0c0c0"/><rect x="0" y="28" width="1" height="1" fill="#fff"/><rect x="0" y="32" width="2" height="2" fill="#c0c0c0"/><rect x="0" y="32" width="1" height="1" fill="#fff"/><rect x="0" y="36" width="2" height="2" fill="#c0c0c0"/><rect x="0" y="36" width="1" height="1" fill="#fff"/><rect x="0" y="40" width="2" height="2" fill="#c0c0c0"/><rect x="0" y="40" width="1" height="1" fill="#fff"/><rect x="0" y="44" width="2" height="2" fill="#c0c0c0"/><rect x="0" y="44" width="1" height="1" fill="#fff"/><rect x="0" y="48" width="2" height="2" fill="#c0c0c0"/><rect x="0" y="48" width="1" height="1" fill="#fff"/></svg>
<svg class="a" style="left:1251px;top:96px;" width="22" height="22" viewBox="0 0 22 22"><path d="M17.8 6.6 A8 8 0 0 0 4.2 7.6" fill="none" stroke="#000" stroke-width="2.5" stroke-linecap="round"/><path d="M0.2 5.1 L6.3 7.6 L1.2 11.6 Z" fill="#000" stroke="#000" stroke-width="0.6" stroke-linejoin="round"/><path d="M3.5 14.8 A8 8 0 0 0 17.4 14.2" fill="none" stroke="#000" stroke-width="2.5" stroke-linecap="round"/><path d="M20.7 10.1 L21.9 16.4 L16 14 Z" fill="#000" stroke="#000" stroke-width="0.6" stroke-linejoin="round"/><path d="M8.3 8.4 L13.8 7.9 L14 13.3 L9 14 Z" fill="#000" stroke="#000" stroke-width="0.8" stroke-linejoin="round"/></svg>
<svg class="a" style="left:1276px;top:96px;" width="23" height="22" viewBox="0 0 23 22"><rect x="6" y="0" width="9" height="6" fill="#000"/><rect x="0.5" y="6" width="15.5" height="11" rx="2.2" fill="#000"/><rect x="5" y="13" width="9" height="8.5" fill="#fff" stroke="#000" stroke-width="1.2"/><path d="M6.8 15.8 H12.3 M6.8 18.3 H12.3" stroke="#000" stroke-width="1.1"/><path d="M21.5 1.5 Q22.5 6 19 10 L16.5 13.5 L15.5 12.5 Q17 6.5 21.5 1.5 Z" fill="#000"/><path d="M15.8 12.5 L18 15" stroke="#000" stroke-width="1.4"/><ellipse cx="19.5" cy="17" rx="2.6" ry="2.3" fill="none" stroke="#000" stroke-width="1.5" transform="rotate(35 19.5 17)"/></svg>
<div class="a" style="left:1302px;top:79px;width:1px;height:58px;background:#c2c2c2;"></div>
<div class="a" style="left:1303px;top:79px;width:1px;height:58px;background:#fff;"></div>
<svg class="a" style="left:1308px;top:82px;" width="2" height="52" viewBox="0 0 2 52"><rect x="0" y="0" width="2" height="2" fill="#c0c0c0"/><rect x="0" y="0" width="1" height="1" fill="#fff"/><rect x="0" y="4" width="2" height="2" fill="#c0c0c0"/><rect x="0" y="4" width="1" height="1" fill="#fff"/><rect x="0" y="8" width="2" height="2" fill="#c0c0c0"/><rect x="0" y="8" width="1" height="1" fill="#fff"/><rect x="0" y="12" width="2" height="2" fill="#c0c0c0"/><rect x="0" y="12" width="1" height="1" fill="#fff"/><rect x="0" y="16" width="2" height="2" fill="#c0c0c0"/><rect x="0" y="16" width="1" height="1" fill="#fff"/><rect x="0" y="20" width="2" height="2" fill="#c0c0c0"/><rect x="0" y="20" width="1" height="1" fill="#fff"/><rect x="0" y="24" width="2" height="2" fill="#c0c0c0"/><rect x="0" y="24" width="1" height="1" fill="#fff"/><rect x="0" y="28" width="2" height="2" fill="#c0c0c0"/><rect x="0" y="28" width="1" height="1" fill="#fff"/><rect x="0" y="32" width="2" height="2" fill="#c0c0c0"/><rect x="0" y="32" width="1" height="1" fill="#fff"/><rect x="0" y="36" width="2" height="2" fill="#c0c0c0"/><rect x="0" y="36" width="1" height="1" fill="#fff"/><rect x="0" y="40" width="2" height="2" fill="#c0c0c0"/><rect x="0" y="40" width="1" height="1" fill="#fff"/><rect x="0" y="44" width="2" height="2" fill="#c0c0c0"/><rect x="0" y="44" width="1" height="1" fill="#fff"/><rect x="0" y="48" width="2" height="2" fill="#c0c0c0"/><rect x="0" y="48" width="1" height="1" fill="#fff"/></svg>
<svg class="a" style="left:1315px;top:97px;" width="22" height="22" viewBox="0 0 22 22"><rect x="1.8" y="1.8" width="4.4" height="17.8" rx="0.8" fill="none" stroke="#a8a8a8" stroke-width="1.1"/><path d="M6 10.5 H10" stroke="#b0b0b0" stroke-width="1"/><rect x="10" y="6.6" width="7.8" height="7.6" fill="none" stroke="#a8a8a8" stroke-width="1.1"/><path d="M18.8 7.5 V14 M20.5 7.5 V14" stroke="#c8c8c8" stroke-width="0.8" stroke-dasharray="1 1"/></svg>
<svg class="a" style="left:1361px;top:91px;" width="5" height="7" viewBox="0 0 5 7"><path d="M0.8 0.8 L3.8 3.5 L0.8 6.2" fill="none" stroke="#000" stroke-width="1.7"/></svg>
<svg class="a" style="left:4px;top:143px;" width="58" height="2" viewBox="0 0 58 2"><rect x="0" y="0" width="2" height="2" fill="#c0c0c0"/><rect x="0" y="0" width="1" height="1" fill="#fff"/><rect x="4" y="0" width="2" height="2" fill="#c0c0c0"/><rect x="4" y="0" width="1" height="1" fill="#fff"/><rect x="8" y="0" width="2" height="2" fill="#c0c0c0"/><rect x="8" y="0" width="1" height="1" fill="#fff"/><rect x="12" y="0" width="2" height="2" fill="#c0c0c0"/><rect x="12" y="0" width="1" height="1" fill="#fff"/><rect x="16" y="0" width="2" height="2" fill="#c0c0c0"/><rect x="16" y="0" width="1" height="1" fill="#fff"/><rect x="20" y="0" width="2" height="2" fill="#c0c0c0"/><rect x="20" y="0" width="1" height="1" fill="#fff"/><rect x="24" y="0" width="2" height="2" fill="#c0c0c0"/><rect x="24" y="0" width="1" height="1" fill="#fff"/><rect x="28" y="0" width="2" height="2" fill="#c0c0c0"/><rect x="28" y="0" width="1" height="1" fill="#fff"/><rect x="32" y="0" width="2" height="2" fill="#c0c0c0"/><rect x="32" y="0" width="1" height="1" fill="#fff"/><rect x="36" y="0" width="2" height="2" fill="#c0c0c0"/><rect x="36" y="0" width="1" height="1" fill="#fff"/><rect x="40" y="0" width="2" height="2" fill="#c0c0c0"/><rect x="40" y="0" width="1" height="1" fill="#fff"/><rect x="44" y="0" width="2" height="2" fill="#c0c0c0"/><rect x="44" y="0" width="1" height="1" fill="#fff"/><rect x="48" y="0" width="2" height="2" fill="#c0c0c0"/><rect x="48" y="0" width="1" height="1" fill="#fff"/><rect x="52" y="0" width="2" height="2" fill="#c0c0c0"/><rect x="52" y="0" width="1" height="1" fill="#fff"/><rect x="56" y="0" width="2" height="2" fill="#c0c0c0"/><rect x="56" y="0" width="1" height="1" fill="#fff"/></svg>
<div class="a" style="left:19px;top:148px;width:26px;height:23px;background:#cce4f7;border:1px solid #99c9ef;"></div>
<svg class="a" style="left:19px;top:148px;" width="26" height="24" viewBox="0 0 26 24"><path d="M7 3.5 L20.5 12.5 L15.5 13.8 L19 19.5 L16 21.2 L12.5 15.5 L9 19 Z" fill="#cce4f7" stroke="#000" stroke-width="1.9" stroke-linejoin="round"/></svg>
<svg class="a" style="left:20px;top:172px;" width="24" height="24" viewBox="0 0 24 24"><path d="M6.96 15.53 L11.12 17.93 L16.11 9.26 L11.95 6.86 Z" fill="#000"/><path d="M12.6 5.9 L16.5 8.2 L18.0 5.6 Q18.5 3.9 16.6 2.8 Q14.8 1.8 13.9 3.5 Z" fill="#000" stroke="#000" stroke-width="0.8" stroke-linejoin="round"/><path d="M7.1 15.9 L10.9 18.1 L6.5 21.2 Z" fill="#fff" stroke="#000" stroke-width="0.9" stroke-linejoin="round"/><circle cx="6.6" cy="20.8" r="0.9" fill="#000"/></svg>
<svg class="a" style="left:20px;top:196px;" width="24" height="24" viewBox="0 0 24 24"><rect x="3" y="3" width="18" height="18" fill="none" stroke="#000" stroke-width="2.3"/></svg>
<svg class="a" style="left:20px;top:220px;" width="24" height="24" viewBox="0 0 24 24"><circle cx="12" cy="12" r="8.8" fill="none" stroke="#000" stroke-width="2.3"/></svg>
<svg class="a" style="left:20px;top:244px;" width="24" height="24" viewBox="0 0 24 24"><path d="M1.8 12 L6.7 3.8 H17.3 L22.2 12 L17.3 20.2 H6.7 Z" fill="none" stroke="#000" stroke-width="2.1" stroke-linejoin="round"/></svg>
<svg class="a" style="left:20px;top:268px;" width="24" height="24" viewBox="0 0 24 24"><path d="M9.6 2.7 L17.5 5.4 L21.8 13.6 L15.4 21.2 L3.2 20.9 L2.7 6.2 Z" fill="none" stroke="#000" stroke-width="2" stroke-linejoin="round"/><g fill="#000"><circle cx="9.6" cy="2.7" r="1.4"/><circle cx="17.5" cy="5.4" r="1.4"/><circle cx="21.8" cy="13.6" r="1.4"/><circle cx="15.4" cy="21.2" r="1.4"/><circle cx="3.2" cy="20.9" r="1.4"/><circle cx="2.7" cy="6.2" r="1.4"/></g></svg>
<svg class="a" style="left:20px;top:292px;" width="24" height="24" viewBox="0 0 24 24"><path d="M5 18.7 L10.3 5.3 H13.8 L19.2 18.7 H15.3 L14.3 16 H9.7 L8.7 18.7 Z M10.8 13 H13.3 L12 9.3 Z" fill="#000" fill-rule="evenodd"/><circle cx="7.7" cy="4.5" r="1.8" fill="#e01010"/></svg>
<svg class="a" style="left:20px;top:316px;" width="24" height="24" viewBox="0 0 24 24"><path d="M12 21.8 L5.8 12.5 Q4.8 10.8 4.8 9 Q4.8 1.8 12 1.8 Q19.2 1.8 19.2 9 Q19.2 10.8 18.2 12.5 Z" fill="#000"/><circle cx="12" cy="9.5" r="2.6" fill="#f0f0f0"/></svg>
<svg class="a" style="left:20px;top:340px;" width="24" height="24" viewBox="0 0 24 24"><g transform="rotate(-42 12 12)"><rect x="0.5" y="9.3" width="23" height="5.4" fill="#fff" stroke="#000" stroke-width="1.6"/><path d="M4 9.5 V11.5 M7 9.5 V12.5 M10 9.5 V11.5 M13 9.5 V12.5 M16 9.5 V11.5 M19 9.5 V12.5" stroke="#000" stroke-width="0.9"/></g></svg>
<div class="a" style="left:0px;top:365px;width:63px;height:1px;background:#cfcfcf;"></div>
<svg class="a" style="left:4px;top:371px;" width="58" height="2" viewBox="0 0 58 2"><rect x="0" y="0" width="2" height="2" fill="#c0c0c0"/><rect x="0" y="0" width="1" height="1" fill="#fff"/><rect x="4" y="0" width="2" height="2" fill="#c0c0c0"/><rect x="4" y="0" width="1" height="1" fill="#fff"/><rect x="8" y="0" width="2" height="2" fill="#c0c0c0"/><rect x="8" y="0" width="1" height="1" fill="#fff"/><rect x="12" y="0" width="2" height="2" fill="#c0c0c0"/><rect x="12" y="0" width="1" height="1" fill="#fff"/><rect x="16" y="0" width="2" height="2" fill="#c0c0c0"/><rect x="16" y="0" width="1" height="1" fill="#fff"/><rect x="20" y="0" width="2" height="2" fill="#c0c0c0"/><rect x="20" y="0" width="1" height="1" fill="#fff"/><rect x="24" y="0" width="2" height="2" fill="#c0c0c0"/><rect x="24" y="0" width="1" height="1" fill="#fff"/><rect x="28" y="0" width="2" height="2" fill="#c0c0c0"/><rect x="28" y="0" width="1" height="1" fill="#fff"/><rect x="32" y="0" width="2" height="2" fill="#c0c0c0"/><rect x="32" y="0" width="1" height="1" fill="#fff"/><rect x="36" y="0" width="2" height="2" fill="#c0c0c0"/><rect x="36" y="0" width="1" height="1" fill="#fff"/><rect x="40" y="0" width="2" height="2" fill="#c0c0c0"/><rect x="40" y="0" width="1" height="1" fill="#fff"/><rect x="44" y="0" width="2" height="2" fill="#c0c0c0"/><rect x="44" y="0" width="1" height="1" fill="#fff"/><rect x="48" y="0" width="2" height="2" fill="#c0c0c0"/><rect x="48" y="0" width="1" height="1" fill="#fff"/><rect x="52" y="0" width="2" height="2" fill="#c0c0c0"/><rect x="52" y="0" width="1" height="1" fill="#fff"/><rect x="56" y="0" width="2" height="2" fill="#c0c0c0"/><rect x="56" y="0" width="1" height="1" fill="#fff"/></svg>
<svg class="a" style="left:20px;top:376px;" width="24" height="24" viewBox="0 0 24 24"><ellipse cx="12" cy="12" rx="8.7" ry="9.6" fill="none" stroke="#666" stroke-width="1"/><ellipse cx="12" cy="12" rx="7" ry="8" fill="none" stroke="#444" stroke-width="1.2"/><ellipse cx="12" cy="12" rx="4.6" ry="5.8" fill="none" stroke="#555" stroke-width="2"/></svg>
<div class="a" style="left:5px;top:402px;width:54px;height:1px;background:#cfcfcf;"></div>
<svg class="a" style="left:20px;top:406px;" width="24" height="24" viewBox="0 0 24 24"><rect x="11" y="3" width="10" height="11" fill="#f0f0f0" stroke="#555" stroke-width="1.6"/><rect x="3.5" y="7" width="10" height="10" fill="none" stroke="#555" stroke-width="1.6"/><rect x="7.5" y="11" width="10" height="10" fill="#f0f0f0" stroke="#555" stroke-width="1.6"/><path d="M11 7 V14 M7.5 14 H17.5" stroke="#aaa" stroke-width="0.7"/></svg>
<svg class="a" style="left:18px;top:432px;" width="26" height="26" viewBox="0 0 26 26"><rect x="2" y="2.5" width="16" height="15.5" fill="none" stroke="#555" stroke-width="1.9"/><rect x="8" y="8.5" width="16" height="15.5" fill="none" stroke="#555" stroke-width="1.9"/></svg>
<div class="a" style="left:5px;top:462px;width:54px;height:1px;background:#cfcfcf;"></div>
<svg class="a" style="left:20px;top:466px;" width="24" height="24" viewBox="0 0 24 24"><rect x="2.2" y="2.2" width="5.2" height="5" fill="#555"/><rect x="9.3" y="2.2" width="5.2" height="5" fill="#555"/><rect x="16.4" y="2.2" width="5.2" height="5" fill="#555"/><rect x="2.2" y="9.1" width="5.2" height="5" fill="#555"/><rect x="9.3" y="9.1" width="5.2" height="5" fill="#555"/><rect x="16.4" y="9.1" width="5.2" height="5" fill="#555"/><rect x="2.2" y="16.0" width="5.2" height="5" fill="#555"/><rect x="9.3" y="16.0" width="5.2" height="5" fill="#555"/><rect x="16.4" y="16.0" width="5.2" height="5" fill="#555"/></svg>
<svg class="a" style="left:20px;top:490px;" width="24" height="24" viewBox="0 0 24 24"><rect x="9.70" y="1.40" width="4.6" height="4.6" fill="#555"/><rect x="15.87" y="4.13" width="4" height="4" fill="#f0f0f0" stroke="#555" stroke-width="1" transform="rotate(45 17.87 6.13)"/><rect x="18.30" y="10.00" width="4" height="4" fill="#f0f0f0" stroke="#555" stroke-width="1" transform="rotate(90 20.30 12.00)"/><rect x="15.87" y="15.87" width="4" height="4" fill="#f0f0f0" stroke="#555" stroke-width="1" transform="rotate(135 17.87 17.87)"/><rect x="10.00" y="18.30" width="4" height="4" fill="#f0f0f0" stroke="#555" stroke-width="1" transform="rotate(180 12.00 20.30)"/><rect x="4.13" y="15.87" width="4" height="4" fill="#f0f0f0" stroke="#555" stroke-width="1" transform="rotate(225 6.13 17.87)"/><rect x="1.70" y="10.00" width="4" height="4" fill="#f0f0f0" stroke="#555" stroke-width="1" transform="rotate(270 3.70 12.00)"/><rect x="4.13" y="4.13" width="4" height="4" fill="#f0f0f0" stroke="#555" stroke-width="1" transform="rotate(315 6.13 6.13)"/></svg>
<div class="a" style="left:5px;top:516px;width:54px;height:1px;background:#cfcfcf;"></div>
<svg class="a" style="left:20px;top:520px;" width="24" height="24" viewBox="0 0 24 24"><path d="M3 21.5 V12 Q3 3 12 3 H21" fill="none" stroke="#000" stroke-width="2.2"/><path d="M21 3.5 V21 H3.5" fill="none" stroke="#000" stroke-width="1.2" stroke-dasharray="2 1.5"/></svg>
<div class="t" style="left:13.30px;top:545.47px;font-size:11.5px;color:#000;transform:scaleX(0.9231);">Radius:</div>
<div class="a" style="left:2px;top:557px;width:60px;height:17px;background:#f0f0f0;border:1px solid #c9c9c9;"></div>
<div class="a" style="left:46px;top:559px;width:14px;height:13px;border:1px solid #dcdcdc;"></div>
<div class="a" style="left:46px;top:565px;width:14px;height:1px;background:#dcdcdc;"></div>
<svg class="a" style="left:49px;top:559px;" width="8" height="13" viewBox="0 0 8 13"><path d="M1 4.5 L4 2 L7 4.5 Z M1 8 L4 10.5 L7 8 Z" fill="#5a5a5a"/></svg>
<div class="t" style="left:13.00px;top:561.57px;font-size:11.5px;color:#767676;transform:scaleX(0.8932);">10.0</div>
<svg class="a" style="left:0px;top:0px;" width="1366" height="768" viewBox="0 0 1366 768"><path d="M289.5 151.5 V660" stroke="#e1e1e1" stroke-width="1"/><path d="M301.5 151.5 V660" stroke="#e1e1e1" stroke-width="1"/><path d="M313.5 151.5 V660" stroke="#e1e1e1" stroke-width="1"/><path d="M325.5 151.5 V660" stroke="#e1e1e1" stroke-width="1"/><path d="M337.5 151.5 V660" stroke="#e1e1e1" stroke-width="1"/><path d="M348.5 151.5 V660" stroke="#e1e1e1" stroke-width="1"/><path d="M360.5 151.5 V660" stroke="#e1e1e1" stroke-width="1"/><path d="M372.5 151.5 V660" stroke="#e1e1e1" stroke-width="1"/><path d="M384.5 151.5 V660" stroke="#e1e1e1" stroke-width="1"/><path d="M396.5 151.5 V660" stroke="#e1e1e1" stroke-width="1"/><path d="M408.5 151.5 V660" stroke="#e1e1e1" stroke-width="1"/><path d="M419.5 151.5 V660" stroke="#e1e1e1" stroke-width="1"/><path d="M431.5 151.5 V660" stroke="#e1e1e1" stroke-width="1"/><path d="M443.5 151.5 V660" stroke="#e1e1e1" stroke-width="1"/><path d="M455.5 151.5 V660" stroke="#e1e1e1" stroke-width="1"/><path d="M467.5 151.5 V660" stroke="#e1e1e1" stroke-width="1"/><path d="M479.5 151.5 V660" stroke="#e1e1e1" stroke-width="1"/><path d="M490.5 151.5 V660" stroke="#e1e1e1" stroke-width="1"/><path d="M502.5 151.5 V660" stroke="#e1e1e1" stroke-width="1"/><path d="M514.5 151.5 V660" stroke="#e1e1e1" stroke-width="1"/><path d="M526.5 151.5 V660" stroke="#e1e1e1" stroke-width="1"/><path d="M538.5 151.5 V660" stroke="#e1e1e1" stroke-width="1"/><path d="M549.5 151.5 V660" stroke="#e1e1e1" stroke-width="1"/><path d="M561.5 151.5 V660" stroke="#e1e1e1" stroke-width="1"/><path d="M573.5 151.5 V660" stroke="#e1e1e1" stroke-width="1"/><path d="M585.5 151.5 V660" stroke="#e1e1e1" stroke-width="1"/><path d="M597.5 151.5 V660" stroke="#e1e1e1" stroke-width="1"/><path d="M609.5 151.5 V660" stroke="#e1e1e1" stroke-width="1"/><path d="M620.5 151.5 V660" stroke="#e1e1e1" stroke-width="1"/><path d="M632.5 151.5 V660" stroke="#e1e1e1" stroke-width="1"/><path d="M644.5 151.5 V660" stroke="#e1e1e1" stroke-width="1"/><path d="M656.5 151.5 V660" stroke="#e1e1e1" stroke-width="1"/><path d="M668.5 151.5 V660" stroke="#e1e1e1" stroke-width="1"/><path d="M680.5 151.5 V660" stroke="#e1e1e1" stroke-width="1"/><path d="M691.5 151.5 V660" stroke="#e1e1e1" stroke-width="1"/><path d="M703.5 151.5 V660" stroke="#e1e1e1" stroke-width="1"/><path d="M715.5 151.5 V660" stroke="#e1e1e1" stroke-width="1"/><path d="M727.5 151.5 V660" stroke="#e1e1e1" stroke-width="1"/><path d="M739.5 151.5 V660" stroke="#e1e1e1" stroke-width="1"/><path d="M277.5 648.5 H751" stroke="#e1e1e1" stroke-width="1"/><path d="M277.5 636.5 H751" stroke="#e1e1e1" stroke-width="1"/><path d="M277.5 624.5 H751" stroke="#e1e1e1" stroke-width="1"/><path d="M277.5 612.5 H751" stroke="#e1e1e1" stroke-width="1"/><path d="M277.5 601.5 H751" stroke="#e1e1e1" stroke-width="1"/><path d="M277.5 589.5 H751" stroke="#e1e1e1" stroke-width="1"/><path d="M277.5 577.5 H751" stroke="#e1e1e1" stroke-width="1"/><path d="M277.5 565.5 H751" stroke="#e1e1e1" stroke-width="1"/><path d="M277.5 553.5 H751" stroke="#e1e1e1" stroke-width="1"/><path d="M277.5 542.5 H751" stroke="#e1e1e1" stroke-width="1"/><path d="M277.5 530.5 H751" stroke="#e1e1e1" stroke-width="1"/><path d="M277.5 518.5 H751" stroke="#e1e1e1" stroke-width="1"/><path d="M277.5 506.5 H751" stroke="#e1e1e1" stroke-width="1"/><path d="M277.5 494.5 H751" stroke="#e1e1e1" stroke-width="1"/><path d="M277.5 482.5 H751" stroke="#e1e1e1" stroke-width="1"/><path d="M277.5 471.5 H751" stroke="#e1e1e1" stroke-width="1"/><path d="M277.5 459.5 H751" stroke="#e1e1e1" stroke-width="1"/><path d="M277.5 447.5 H751" stroke="#e1e1e1" stroke-width="1"/><path d="M277.5 435.5 H751" stroke="#e1e1e1" stroke-width="1"/><path d="M277.5 423.5 H751" stroke="#e1e1e1" stroke-width="1"/><path d="M277.5 411.5 H751" stroke="#e1e1e1" stroke-width="1"/><path d="M277.5 400.5 H751" stroke="#e1e1e1" stroke-width="1"/><path d="M277.5 388.5 H751" stroke="#e1e1e1" stroke-width="1"/><path d="M277.5 376.5 H751" stroke="#e1e1e1" stroke-width="1"/><path d="M277.5 364.5 H751" stroke="#e1e1e1" stroke-width="1"/><path d="M277.5 352.5 H751" stroke="#e1e1e1" stroke-width="1"/><path d="M277.5 340.5 H751" stroke="#e1e1e1" stroke-width="1"/><path d="M277.5 329.5 H751" stroke="#e1e1e1" stroke-width="1"/><path d="M277.5 317.5 H751" stroke="#e1e1e1" stroke-width="1"/><path d="M277.5 305.5 H751" stroke="#e1e1e1" stroke-width="1"/><path d="M277.5 293.5 H751" stroke="#e1e1e1" stroke-width="1"/><path d="M277.5 281.5 H751" stroke="#e1e1e1" stroke-width="1"/><path d="M277.5 269.5 H751" stroke="#e1e1e1" stroke-width="1"/><path d="M277.5 258.5 H751" stroke="#e1e1e1" stroke-width="1"/><path d="M277.5 246.5 H751" stroke="#e1e1e1" stroke-width="1"/><path d="M277.5 234.5 H751" stroke="#e1e1e1" stroke-width="1"/><path d="M277.5 222.5 H751" stroke="#e1e1e1" stroke-width="1"/><path d="M277.5 210.5 H751" stroke="#e1e1e1" stroke-width="1"/><path d="M277.5 198.5 H751" stroke="#e1e1e1" stroke-width="1"/><path d="M277.5 187.5 H751" stroke="#e1e1e1" stroke-width="1"/><path d="M277.5 175.5 H751" stroke="#e1e1e1" stroke-width="1"/><path d="M277.5 163.5 H751" stroke="#e1e1e1" stroke-width="1"/><path d="M277.6 151.6 H751.4 V660.4 H277.6 Z" fill="none" stroke="#000" stroke-width="1.3"/><path d="M521.32 255.75 L514.50 252.30 L507.68 255.75 L484.50 255.06 L463.34 264.57 L455.72 263.99 L450.74 269.79 L429.05 278.02 L413.15 294.91 L405.89 297.29 L403.51 304.55 L386.62 320.45 L378.39 342.14 L372.59 347.12 L373.17 354.74 L363.66 375.90 L364.35 399.08 L360.90 405.90 L364.35 412.72 L363.66 435.90 L373.17 457.06 L372.59 464.68 L378.39 469.66 L386.62 491.35 L403.51 507.25 L405.89 514.51 L413.15 516.89 L429.05 533.78 L450.74 542.01 L455.72 547.81 L463.34 547.23 L484.50 556.74 L507.68 556.05 L514.50 559.50 L521.32 556.05 L544.50 556.74 L565.66 547.23 L573.28 547.81 L578.26 542.01 L599.95 533.78 L615.85 516.89 L623.11 514.51 L625.49 507.25 L642.38 491.35 L650.61 469.66 L656.41 464.68 L655.83 457.06 L665.34 435.90 L664.65 412.72 L668.10 405.90 L664.65 399.08 L665.34 375.90 L655.83 354.74 L656.41 347.12 L650.61 342.14 L642.38 320.45 L625.49 304.55 L623.11 297.29 L615.85 294.91 L599.95 278.02 L578.26 269.79 L573.28 263.99 L565.66 264.57 L544.50 255.06 Z" fill="none" stroke="#1e1e1e" stroke-width="1.15" stroke-linejoin="round"/><rect x="277.7" y="654.4" width="6" height="5.8" fill="#d40000" stroke="#7a0000" stroke-width="0.6"/><rect x="356.6" y="555.6" width="8.2" height="8.2" rx="1" fill="#6fd46f" fill-opacity="0.85" stroke="#3d8a3d" stroke-width="1"/><ellipse cx="494" cy="571.4" rx="2.1" ry="2.6" fill="#e81010"/></svg>
<div class="t" style="left:75.00px;top:147.74px;font-size:12px;color:#7d7d7d;transform:scaleX(1.0528);">-160</div>
<div class="t" style="left:75.00px;top:654.14px;font-size:12px;color:#7d7d7d;transform:scaleX(1.0528);">-160</div>
<div class="t" style="left:173.25px;top:147.74px;font-size:12px;color:#7d7d7d;transform:scaleX(1.0436);">-80</div>
<div class="t" style="left:173.25px;top:654.14px;font-size:12px;color:#7d7d7d;transform:scaleX(1.0436);">-80</div>
<div class="t" style="left:273.80px;top:147.74px;font-size:12px;color:#7d7d7d;transform:scaleX(0.9421);">0</div>
<div class="t" style="left:273.80px;top:654.14px;font-size:12px;color:#7d7d7d;transform:scaleX(0.9421);">0</div>
<div class="t" style="left:364.80px;top:147.74px;font-size:12px;color:#7d7d7d;transform:scaleX(1.0180);">80</div>
<div class="t" style="left:364.80px;top:654.14px;font-size:12px;color:#7d7d7d;transform:scaleX(1.0180);">80</div>
<div class="t" style="left:455.75px;top:147.74px;font-size:12px;color:#7d7d7d;transform:scaleX(1.0484);">160</div>
<div class="t" style="left:455.75px;top:654.14px;font-size:12px;color:#7d7d7d;transform:scaleX(1.0484);">160</div>
<div class="t" style="left:550.39px;top:147.74px;font-size:12px;color:#7d7d7d;transform:scaleX(1.0484);">240</div>
<div class="t" style="left:550.39px;top:654.14px;font-size:12px;color:#7d7d7d;transform:scaleX(1.0484);">240</div>
<div class="t" style="left:645.04px;top:147.74px;font-size:12px;color:#7d7d7d;transform:scaleX(1.0484);">320</div>
<div class="t" style="left:645.04px;top:654.14px;font-size:12px;color:#7d7d7d;transform:scaleX(1.0484);">320</div>
<div class="t" style="left:739.69px;top:147.74px;font-size:12px;color:#7d7d7d;transform:scaleX(1.0484);">400</div>
<div class="t" style="left:739.69px;top:654.14px;font-size:12px;color:#7d7d7d;transform:scaleX(1.0484);">400</div>
<div class="t" style="left:834.34px;top:147.74px;font-size:12px;color:#7d7d7d;transform:scaleX(1.0484);">480</div>
<div class="t" style="left:834.34px;top:654.14px;font-size:12px;color:#7d7d7d;transform:scaleX(1.0484);">480</div>
<div class="t" style="left:928.99px;top:147.74px;font-size:12px;color:#7d7d7d;transform:scaleX(1.0484);">560</div>
<div class="t" style="left:928.99px;top:654.14px;font-size:12px;color:#7d7d7d;transform:scaleX(1.0484);">560</div>
<div class="t" style="left:71.00px;top:181.74px;font-size:12px;color:#7d7d7d;transform:scaleX(1.0484);">400</div>
<div class="t" style="left:936.30px;top:181.74px;font-size:12px;color:#7d7d7d;transform:scaleX(1.0484);">400</div>
<div class="t" style="left:71.00px;top:276.52px;font-size:12px;color:#7d7d7d;transform:scaleX(1.0484);">320</div>
<div class="t" style="left:936.30px;top:276.52px;font-size:12px;color:#7d7d7d;transform:scaleX(1.0484);">320</div>
<div class="t" style="left:71.00px;top:371.30px;font-size:12px;color:#7d7d7d;transform:scaleX(1.0484);">240</div>
<div class="t" style="left:936.30px;top:371.30px;font-size:12px;color:#7d7d7d;transform:scaleX(1.0484);">240</div>
<div class="t" style="left:71.00px;top:466.08px;font-size:12px;color:#7d7d7d;transform:scaleX(1.0484);">160</div>
<div class="t" style="left:936.30px;top:466.08px;font-size:12px;color:#7d7d7d;transform:scaleX(1.0484);">160</div>
<div class="t" style="left:71.00px;top:560.86px;font-size:12px;color:#7d7d7d;transform:scaleX(1.0180);">80</div>
<div class="t" style="left:943.70px;top:560.86px;font-size:12px;color:#7d7d7d;transform:scaleX(1.0180);">80</div>
<div class="t" style="left:71.00px;top:654.84px;font-size:12px;color:#7d7d7d;transform:scaleX(0.9421);">0</div>
<div class="t" style="left:951.00px;top:654.84px;font-size:12px;color:#7d7d7d;transform:scaleX(0.9421);">0</div>
<div class="t" style="left:269.40px;top:624.64px;font-size:12px;color:#5e5068;">Y</div>
<div class="t" style="left:302.20px;top:659.84px;font-size:12px;color:#5e5068;">X</div>
<div class="a" style="left:969px;top:138px;width:397px;height:22px;background:linear-gradient(to right,#000 0%,#3c1212 18%,#6a1c1c 36%,#9a2626 50%,#c03030 58%,#c84630 70%,#d45c30 84%,#e07830 100%);"></div>
<div class="t" style="left:975.40px;top:143.54px;font-size:12px;color:#fff;transform:scaleX(0.9698);">Console</div>
<svg class="a" style="left:1328px;top:144px;" width="10" height="10" viewBox="0 0 10 10"><path d="M3.5 0.7 H9.3 V6.5 H6.5 M0.7 3.5 H6.5 V9.3 H0.7 Z" fill="none" stroke="#222" stroke-width="1.4"/><path d="M0.7 4.2 H6.5" stroke="#222" stroke-width="1.6"/><path d="M3.5 1.4 H9.3" stroke="#222" stroke-width="1.6"/></svg>
<svg class="a" style="left:1349px;top:144px;" width="10" height="10" viewBox="0 0 10 10"><path d="M1.2 1.2 L8.8 8.8 M8.8 1.2 L1.2 8.8" stroke="#222" stroke-width="2"/></svg>
<div class="a" style="left:971px;top:162px;width:393px;height:195px;background:#fff;border:1px solid #828282;"></div>
<div class="a" style="left:1347px;top:163px;width:16px;height:193px;background:#f0f0f0;"></div>
<div class="a" style="left:1348px;top:186px;width:14px;height:27px;background:#cdcdcd;"></div>
<svg class="a" style="left:1349px;top:167px;" width="12" height="10" viewBox="0 0 12 10"><path d="M2.5 7 L6 3.5 L9.5 7" fill="none" stroke="#555" stroke-width="1.6"/></svg>
<svg class="a" style="left:1349px;top:343px;" width="12" height="10" viewBox="0 0 12 10"><path d="M2.5 3 L6 6.5 L9.5 3" fill="none" stroke="#555" stroke-width="1.6"/></svg>
<div class="a" style="left:972px;top:163px;width:375px;height:193px;overflow:hidden">
<div class="t" style="left:3.60px;top:2.19px;font-size:11px;color:#000;">ok</div>
<div class="t" style="left:3.60px;top:15.19px;font-size:11px;color:#000;transform:scaleX(0.9285);">[AUTHOR: ORTUR]</div>
<div class="t" style="left:3.60px;top:28.19px;font-size:11px;color:#000;transform:scaleX(0.9651);">[MODEL: Ortur Laser Master 2]</div>
<div class="t" style="left:3.60px;top:41.19px;font-size:11px;color:#000;transform:scaleX(0.9849);">[OLF: 140]</div>
<div class="t" style="left:3.60px;top:54.19px;font-size:11px;color:#000;transform:scaleX(0.9858);">[DATE:13:36:28 - Dec 31 2020]</div>
<div class="t" style="left:3.60px;top:67.19px;font-size:11px;color:#000;transform:scaleX(0.9977);">[VER:1.1h.20190903:]</div>
<div class="t" style="left:3.60px;top:80.19px;font-size:11px;color:#000;transform:scaleX(0.9834);">[OPT:VNZHI,99,254]</div>
<div class="t" style="left:3.60px;top:93.19px;font-size:11px;color:#000;transform:scaleX(1.0151);">Target buffer size found</div>
<div class="t" style="left:3.60px;top:106.19px;font-size:11px;color:#000;">ok</div>
<div class="t" style="left:3.60px;top:119.19px;font-size:11px;color:#000;transform:scaleX(0.9154);">Homing</div>
<div class="t" style="left:3.60px;top:132.19px;font-size:11px;color:#000;">ok</div>
<div class="t" style="left:3.60px;top:145.19px;font-size:11px;color:#000;transform:scaleX(1.0175);">&lt;Idle|MPos:0.000,0.000,0.000|Bf:99,254|FS:0,0|Pn:P|WCO:</div>
<div class="t" style="left:3.60px;top:158.19px;font-size:11px;color:#000;transform:scaleX(1.0460);">0.000,0.000,0.000&gt;</div>
<div class="t" style="left:3.60px;top:171.19px;font-size:11px;color:#000;">ok</div>
<div class="t" style="left:3.60px;top:184.69px;font-size:11px;color:#000;transform:scaleX(1.0262);">&lt;Idle|MPos:0.000,0.000,0.000|Bf:99,254|FS:0,0|Pn:P|Ov:100,100,100|</div>
</div>
<div class="a" style="left:971px;top:359px;width:314px;height:20px;background:#fff;border:1px solid #adadad;"></div>
<div class="t" style="left:974.50px;top:365.29px;font-size:11px;color:#8a8a8a;transform:scaleX(0.9687);">(type commands here)</div>
<div class="t" style="left:1302.50px;top:364.82px;font-size:11.5px;color:#000;transform:scaleX(0.8903);">Show all</div>
<svg class="a" style="left:1348px;top:364px;" width="18" height="10" viewBox="0 0 18 10"><rect x="5" y="1.2" width="11.5" height="7" rx="2.5" fill="#8b0000"/><rect x="0.8" y="0.7" width="7.4" height="8.6" rx="2.4" fill="#e3dada" stroke="#111" stroke-width="1.4"/></svg>
<div class="a" style="left:972px;top:382px;width:127px;height:20px;background:#e1e1e1;border:1px solid #adadad;"></div>
<div class="t" style="left:1017.75px;top:387.97px;font-size:11.5px;color:#000;transform:scaleX(0.9255);">Macro0</div>
<div class="a" style="left:1103px;top:382px;width:127px;height:20px;background:#e1e1e1;border:1px solid #adadad;"></div>
<div class="t" style="left:1148.75px;top:387.97px;font-size:11.5px;color:#000;transform:scaleX(0.9255);">Macro1</div>
<div class="a" style="left:1234px;top:382px;width:128px;height:20px;background:#e1e1e1;border:1px solid #adadad;"></div>
<div class="t" style="left:1280.25px;top:387.97px;font-size:11.5px;color:#000;transform:scaleX(0.9255);">Macro2</div>
<div class="a" style="left:972px;top:407px;width:127px;height:20px;background:#e1e1e1;border:1px solid #adadad;"></div>
<div class="t" style="left:1017.75px;top:412.97px;font-size:11.5px;color:#000;transform:scaleX(0.9255);">Macro3</div>
<div class="a" style="left:1103px;top:407px;width:127px;height:20px;background:#e1e1e1;border:1px solid #adadad;"></div>
<div class="t" style="left:1148.75px;top:412.97px;font-size:11.5px;color:#000;transform:scaleX(0.9255);">Macro4</div>
<div class="a" style="left:1234px;top:407px;width:128px;height:20px;background:#e1e1e1;border:1px solid #adadad;"></div>
<div class="t" style="left:1280.25px;top:412.97px;font-size:11.5px;color:#000;transform:scaleX(0.9255);">Macro5</div>
<div class="a" style="left:966px;top:431px;width:400px;height:1px;background:#c8c8c8;"></div>
<div class="a" style="left:971px;top:432px;width:85px;height:18px;background:#f0f0f0;border:1px solid #d9d9d9;"></div>
<div class="t" style="left:980.60px;top:435.97px;font-size:11.5px;color:#000;transform:scaleX(0.9402);">Cuts / Layers</div>
<div class="a" style="left:1055px;top:431px;width:64px;height:21px;background:#fff;border:1px solid #d9d9d9;"></div>
<div class="a" style="left:1056px;top:431px;width:62px;height:1px;background:#fff;"></div>
<div class="t" style="left:1068.40px;top:436.67px;font-size:11.5px;color:#000;transform:scaleX(0.8933);">Console</div>
<div class="a" style="left:969px;top:456px;width:397px;height:22px;background:linear-gradient(to right,#000 0%,#3c1212 18%,#6a1c1c 36%,#9a2626 50%,#c03030 58%,#c84630 70%,#d45c30 84%,#e07830 100%);"></div>
<div class="t" style="left:975.40px;top:461.54px;font-size:12px;color:#fff;transform:scaleX(0.8824);">Laser</div>
<svg class="a" style="left:1328px;top:462px;" width="10" height="10" viewBox="0 0 10 10"><path d="M3.5 0.7 H9.3 V6.5 H6.5 M0.7 3.5 H6.5 V9.3 H0.7 Z" fill="none" stroke="#222" stroke-width="1.4"/><path d="M0.7 4.2 H6.5" stroke="#222" stroke-width="1.6"/><path d="M3.5 1.4 H9.3" stroke="#222" stroke-width="1.6"/></svg>
<svg class="a" style="left:1349px;top:462px;" width="10" height="10" viewBox="0 0 10 10"><path d="M1.2 1.2 L8.8 8.8 M8.8 1.2 L1.2 8.8" stroke="#222" stroke-width="2"/></svg>
<div class="t" style="left:969.40px;top:484.27px;font-size:11.5px;color:#000;transform:scaleX(0.9126);">Disconnected</div>
<div class="a" style="left:971px;top:496px;width:128px;height:22px;background:#e1e1e1;border:1px solid #adadad;"></div>
<div class="t" style="left:1029.40px;top:502.87px;font-size:11.5px;color:#000;transform:scaleX(0.8801);">Pause</div>
<svg class="a" style="left:1010px;top:499px;" width="16" height="17" viewBox="0 0 16 17"><rect x="1" y="0.3" width="4.8" height="16" rx="0.6" fill="#000"/><rect x="10" y="0.3" width="4.8" height="16" rx="0.6" fill="#000"/></svg>
<div class="a" style="left:1104px;top:496px;width:127px;height:22px;background:#e1e1e1;border:1px solid #adadad;"></div>
<div class="t" style="left:1165.20px;top:502.87px;font-size:11.5px;color:#000;transform:scaleX(0.9294);">Stop</div>
<svg class="a" style="left:1145px;top:499px;" width="17" height="17" viewBox="0 0 17 17"><rect x="1" y="0.3" width="15.6" height="16" rx="0.8" fill="#000"/></svg>
<div class="a" style="left:1236px;top:496px;width:128px;height:22px;background:#e1e1e1;border:1px solid #adadad;"></div>
<div class="t" style="left:1297.60px;top:502.87px;font-size:11.5px;color:#000;transform:scaleX(1.0001);">Start</div>
<svg class="a" style="left:1278px;top:499px;" width="16" height="17" viewBox="0 0 16 17"><path d="M1 0.3 L15 8.2 L1 16.2 Z" fill="#000"/></svg>
<div class="a" style="left:971px;top:521px;width:194px;height:22px;background:#e1e1e1;border:1px solid #adadad;"></div>
<div class="t" style="left:1062.60px;top:527.97px;font-size:11.5px;color:#000;transform:scaleX(0.8906);">Frame</div>
<svg class="a" style="left:1042px;top:523px;" width="18" height="18" viewBox="0 0 18 18"><path d="M2.3 6 V2.3 H6.5 M11.5 2.3 H15.7 V6 M15.7 11.5 V15.7 H11.5 M6.5 15.7 H2.3 V11.5" fill="none" stroke="#000" stroke-width="2.6"/></svg>
<div class="a" style="left:1170px;top:521px;width:194px;height:22px;background:#e1e1e1;border:1px solid #adadad;"></div>
<div class="t" style="left:1261.20px;top:527.97px;font-size:11.5px;color:#000;transform:scaleX(0.8906);">Frame</div>
<svg class="a" style="left:1241px;top:523px;" width="18" height="18" viewBox="0 0 18 18"><circle cx="9" cy="9" r="7" fill="none" stroke="#000" stroke-width="2.4" stroke-dasharray="4.2 2.3"/></svg>
<div class="a" style="left:971px;top:546px;width:89px;height:22px;background:#e1e1e1;border:1px solid #adadad;"></div>
<div class="t" style="left:1011.40px;top:552.57px;font-size:11.5px;color:#000;transform:scaleX(0.8668);">Home</div>
<svg class="a" style="left:991px;top:549px;" width="18" height="16" viewBox="0 0 18 16"><path d="M1.2 8.2 L9 1.5 L16.8 8.2" fill="none" stroke="#000" stroke-width="2.3" stroke-linejoin="miter"/><path d="M3.8 7 V14.3 H14.2 V7" fill="none" stroke="#000" stroke-width="2.2"/><rect x="7.3" y="9.3" width="3.4" height="5.5" fill="#000"/><rect x="3" y="1.2" width="2" height="5" fill="#000"/></svg>
<div class="a" style="left:1068px;top:546px;width:88px;height:22px;background:#e1e1e1;border:1px solid #adadad;"></div>
<div class="t" style="left:1082.70px;top:552.57px;font-size:11.5px;color:#000;transform:scaleX(0.9097);">Go to Origin</div>
<div class="t" style="left:1198.30px;top:553.07px;font-size:11.5px;color:#000;transform:scaleX(0.9510);">Start From:</div>
<div class="a" style="left:1260px;top:547px;width:105px;height:20px;background:#e1e1e1;border:1px solid #adadad;"></div>
<div class="t" style="left:1263.60px;top:552.87px;font-size:11.5px;color:#4a1010;transform:scaleX(0.9079);">User Origin</div>
<svg class="a" style="left:1349px;top:554px;" width="11" height="6" viewBox="0 0 11 6"><path d="M0.5 0.5 L5.5 5.5 L10.5 0.5" fill="none" stroke="#333" stroke-width="1"/></svg>
<div class="a" style="left:1262px;top:569px;width:101px;height:53px;border:1px solid #dcdcdc;"></div>
<svg class="a" style="left:1262px;top:569px;" width="101" height="53" viewBox="0 0 101 53"><circle cx="7.4" cy="10.3" r="6.1" fill="#fff" stroke="#333" stroke-width="1.1"/><circle cx="40.4" cy="10.3" r="6.1" fill="#fff" stroke="#333" stroke-width="1.1"/><circle cx="73.5" cy="10.3" r="6.1" fill="#fff" stroke="#333" stroke-width="1.1"/><circle cx="7.4" cy="26.5" r="6.1" fill="#fff" stroke="#333" stroke-width="1.1"/><circle cx="40.4" cy="26.5" r="6.1" fill="#fff" stroke="#333" stroke-width="1.1"/><circle cx="73.5" cy="26.5" r="6.1" fill="#fff" stroke="#333" stroke-width="1.1"/><circle cx="7.4" cy="42.4" r="6.1" fill="#fff" stroke="#333" stroke-width="1.1"/><circle cx="7.4" cy="42.4" r="3.6" fill="#222"/><circle cx="40.4" cy="42.4" r="6.1" fill="#fff" stroke="#333" stroke-width="1.1"/><circle cx="73.5" cy="42.4" r="6.1" fill="#fff" stroke="#333" stroke-width="1.1"/></svg>
<div class="t" style="left:1205.60px;top:591.87px;font-size:11.5px;color:#000;transform:scaleX(0.9099);">Job Origin</div>
<svg class="a" style="left:970px;top:631px;" width="16" height="10" viewBox="0 0 16 10"><rect x="6" y="1" width="10" height="8" rx="3" fill="#2a2a2a"/><rect x="0.8" y="0.8" width="7.6" height="8.6" rx="2.6" fill="#c4c4c4" stroke="#111" stroke-width="1.4"/></svg>
<div class="t" style="left:991.00px;top:630.97px;font-size:11.5px;color:#7a7a7a;transform:scaleX(0.9062);">Use Selection Origin</div>
<div class="a" style="left:1164px;top:624px;width:200px;height:22px;background:#e1e1e1;border:1px solid #adadad;"></div>
<div class="t" style="left:1228.70px;top:631.07px;font-size:11.5px;color:#000;transform:scaleX(0.9007);">Show Last Position</div>
<svg class="a" style="left:1207px;top:625px;" width="20" height="20" viewBox="0 0 20 20"><path d="M2 10 H6 M14 10 H18 M10 2 V5.5 M10 14.5 V18" stroke="#000" stroke-width="2"/><path d="M7 10 H13 M10 7 V13" stroke="#f00" stroke-width="2.4"/></svg>
<div class="a" style="left:971px;top:649px;width:74px;height:21px;background:#e1e1e1;border:1px solid #adadad;"></div>
<div class="t" style="left:988.50px;top:654.37px;font-size:11.5px;color:#000;transform:scaleX(0.9021);">Devices</div>
<div class="a" style="left:1051px;top:649px;width:155px;height:21px;background:#e1e1e1;border:1px solid #adadad;"></div>
<div class="t" style="left:1054.40px;top:654.37px;font-size:11.5px;color:#000;transform:scaleX(0.8906);">COM4</div>
<svg class="a" style="left:1191px;top:656px;" width="11" height="6" viewBox="0 0 11 6"><path d="M0.5 0.5 L5.5 5.5 L10.5 0.5" fill="none" stroke="#333" stroke-width="1"/></svg>
<div class="a" style="left:1211px;top:649px;width:154px;height:21px;background:#e1e1e1;border:1px solid #adadad;"></div>
<div class="t" style="left:1214.30px;top:654.37px;font-size:11.5px;color:#000;transform:scaleX(0.9331);">Ortur LM2</div>
<svg class="a" style="left:1350px;top:656px;" width="11" height="6" viewBox="0 0 11 6"><path d="M0.5 0.5 L5.5 5.5 L10.5 0.5" fill="none" stroke="#333" stroke-width="1"/></svg>
<svg class="a" style="left:4px;top:677px;" width="2" height="27" viewBox="0 0 2 27"><rect x="0" y="0" width="2" height="2" fill="#c0c0c0"/><rect x="0" y="0" width="1" height="1" fill="#fff"/><rect x="0" y="4" width="2" height="2" fill="#c0c0c0"/><rect x="0" y="4" width="1" height="1" fill="#fff"/><rect x="0" y="8" width="2" height="2" fill="#c0c0c0"/><rect x="0" y="8" width="1" height="1" fill="#fff"/><rect x="0" y="12" width="2" height="2" fill="#c0c0c0"/><rect x="0" y="12" width="1" height="1" fill="#fff"/><rect x="0" y="16" width="2" height="2" fill="#c0c0c0"/><rect x="0" y="16" width="1" height="1" fill="#fff"/><rect x="0" y="20" width="2" height="2" fill="#c0c0c0"/><rect x="0" y="20" width="1" height="1" fill="#fff"/><rect x="0" y="24" width="2" height="2" fill="#c0c0c0"/><rect x="0" y="24" width="1" height="1" fill="#fff"/></svg>
<div class="a" style="left:10px;top:676px;width:26px;height:28px;background:#cce4f7;border:1px solid #99c9ef;"></div>
<div class="a" style="left:13px;top:680px;width:22px;height:22px;background:#000000;"></div>
<div class="t" style="left:18.40px;top:686.53px;font-size:10px;color:#fff;transform:scaleX(1.0067);">00</div>
<div class="a" style="left:38px;top:679px;width:22px;height:22px;background:#0000ff;"></div>
<div class="t" style="left:43.40px;top:685.53px;font-size:10px;color:#fff;transform:scaleX(1.0067);">01</div>
<div class="a" style="left:64px;top:679px;width:22px;height:22px;background:#ff0000;"></div>
<div class="t" style="left:69.40px;top:685.53px;font-size:10px;color:#fff;transform:scaleX(1.0067);">02</div>
<div class="a" style="left:90px;top:679px;width:22px;height:22px;background:#00e000;"></div>
<div class="t" style="left:95.40px;top:685.53px;font-size:10px;color:#000;transform:scaleX(1.0067);">03</div>
<div class="a" style="left:116px;top:679px;width:22px;height:22px;background:#d0d000;"></div>
<div class="t" style="left:121.40px;top:685.53px;font-size:10px;color:#000;transform:scaleX(1.0067);">04</div>
<div class="a" style="left:142px;top:679px;width:22px;height:22px;background:#ff8000;"></div>
<div class="t" style="left:147.40px;top:685.53px;font-size:10px;color:#000;transform:scaleX(1.0067);">05</div>
<div class="a" style="left:168px;top:679px;width:22px;height:22px;background:#00e0e0;"></div>
<div class="t" style="left:173.40px;top:685.53px;font-size:10px;color:#000;transform:scaleX(1.0067);">06</div>
<div class="a" style="left:194px;top:679px;width:22px;height:22px;background:#ff00ff;"></div>
<div class="t" style="left:199.40px;top:685.53px;font-size:10px;color:#fff;transform:scaleX(1.0067);">07</div>
<div class="a" style="left:220px;top:679px;width:22px;height:22px;background:#b4b4b4;"></div>
<div class="t" style="left:225.40px;top:685.53px;font-size:10px;color:#000;transform:scaleX(1.0067);">08</div>
<div class="a" style="left:246px;top:679px;width:22px;height:22px;background:#0000a0;"></div>
<div class="t" style="left:251.40px;top:685.53px;font-size:10px;color:#fff;transform:scaleX(1.0067);">09</div>
<div class="a" style="left:272px;top:679px;width:22px;height:22px;background:#a00000;"></div>
<div class="t" style="left:277.40px;top:685.53px;font-size:10px;color:#fff;transform:scaleX(1.0067);">10</div>
<div class="a" style="left:298px;top:679px;width:22px;height:22px;background:#00a000;"></div>
<div class="t" style="left:303.40px;top:685.53px;font-size:10px;color:#fff;transform:scaleX(1.0779);">11</div>
<div class="a" style="left:324px;top:679px;width:22px;height:22px;background:#a0a000;"></div>
<div class="t" style="left:329.40px;top:685.53px;font-size:10px;color:#000;transform:scaleX(1.0067);">12</div>
<div class="a" style="left:350px;top:679px;width:22px;height:22px;background:#c08000;"></div>
<div class="t" style="left:355.40px;top:685.53px;font-size:10px;color:#000;transform:scaleX(1.0067);">13</div>
<div class="a" style="left:376px;top:679px;width:22px;height:22px;background:#00a0ff;"></div>
<div class="t" style="left:381.40px;top:685.53px;font-size:10px;color:#fff;transform:scaleX(1.0067);">14</div>
<div class="a" style="left:402px;top:679px;width:22px;height:22px;background:#a000a0;"></div>
<div class="t" style="left:407.40px;top:685.53px;font-size:10px;color:#fff;transform:scaleX(1.0067);">15</div>
<div class="a" style="left:428px;top:679px;width:22px;height:22px;background:#808080;"></div>
<div class="t" style="left:433.40px;top:685.53px;font-size:10px;color:#fff;transform:scaleX(1.0067);">16</div>
<div class="a" style="left:454px;top:679px;width:22px;height:22px;background:#7d87b9;"></div>
<div class="t" style="left:459.40px;top:685.53px;font-size:10px;color:#000;transform:scaleX(1.0067);">17</div>
<div class="a" style="left:480px;top:679px;width:22px;height:22px;background:#bb7784;"></div>
<div class="t" style="left:485.40px;top:685.53px;font-size:10px;color:#000;transform:scaleX(1.0067);">18</div>
<div class="a" style="left:506px;top:679px;width:22px;height:22px;background:#4a6fe3;"></div>
<div class="t" style="left:511.40px;top:685.53px;font-size:10px;color:#fff;transform:scaleX(1.0067);">19</div>
<div class="a" style="left:532px;top:679px;width:22px;height:22px;background:#d33f6a;"></div>
<div class="t" style="left:537.40px;top:685.53px;font-size:10px;color:#fff;transform:scaleX(1.0067);">20</div>
<div class="a" style="left:558px;top:679px;width:22px;height:22px;background:#8cd78c;"></div>
<div class="t" style="left:563.40px;top:685.53px;font-size:10px;color:#000;transform:scaleX(1.0067);">21</div>
<div class="a" style="left:584px;top:679px;width:22px;height:22px;background:#f0b98d;"></div>
<div class="t" style="left:589.40px;top:685.53px;font-size:10px;color:#000;transform:scaleX(1.0067);">22</div>
<div class="a" style="left:610px;top:679px;width:22px;height:22px;background:#f6c4e1;"></div>
<div class="t" style="left:615.40px;top:685.53px;font-size:10px;color:#000;transform:scaleX(1.0067);">23</div>
<div class="a" style="left:636px;top:679px;width:22px;height:22px;background:#fa9ed4;"></div>
<div class="t" style="left:641.40px;top:685.53px;font-size:10px;color:#000;transform:scaleX(1.0067);">24</div>
<div class="a" style="left:662px;top:679px;width:22px;height:22px;background:#500a78;"></div>
<div class="t" style="left:667.40px;top:685.53px;font-size:10px;color:#fff;transform:scaleX(1.0067);">25</div>
<div class="a" style="left:688px;top:679px;width:22px;height:22px;background:#b45a00;"></div>
<div class="t" style="left:693.40px;top:685.53px;font-size:10px;color:#fff;transform:scaleX(1.0067);">26</div>
<div class="a" style="left:714px;top:679px;width:22px;height:22px;background:#004754;"></div>
<div class="t" style="left:719.40px;top:685.53px;font-size:10px;color:#fff;transform:scaleX(1.0067);">27</div>
<div class="a" style="left:740px;top:679px;width:22px;height:22px;background:#86fa88;"></div>
<div class="t" style="left:745.40px;top:685.53px;font-size:10px;color:#000;transform:scaleX(1.0067);">28</div>
<div class="a" style="left:766px;top:679px;width:22px;height:22px;background:#ffdb66;"></div>
<div class="t" style="left:771.40px;top:685.53px;font-size:10px;color:#000;transform:scaleX(1.0067);">29</div>
<div class="a" style="left:792px;top:679px;width:1px;height:23px;background:#c8c8c8;"></div>
<div class="a" style="left:798px;top:679px;width:22px;height:22px;background:#f36926;"></div>
<div class="t" style="left:803.20px;top:685.53px;font-size:10px;color:#000;transform:scaleX(0.9938);">T1</div>
<div class="a" style="left:824px;top:679px;width:22px;height:22px;background:#0c96d9;"></div>
<div class="t" style="left:829.20px;top:685.53px;font-size:10px;color:#fff;transform:scaleX(0.9938);">T2</div>
<div class="t" style="left:2.00px;top:714.39px;font-size:11px;color:#000;transform:scaleX(1.0083);">x: 506.00, y: 386.00 mm</div>
<div class="a" style="left:523px;top:709px;width:1px;height:17px;background:#c8c8c8;"></div>
<div class="a" style="left:1152px;top:709px;width:1px;height:17px;background:#c8c8c8;"></div>
<svg class="a" style="left:15px;top:740px;" width="17" height="17" viewBox="0 0 17 17"><path d="M0 2.4 L7 1.4 V8 H0 Z M8 1.2 L17 0 V8 H8 Z M0 9 H7 V15.6 L0 14.6 Z M8 9 H17 V17 L8 15.8 Z" fill="#000"/></svg>
<div class="a" style="left:48px;top:729px;width:288px;height:39px;background:#fff;"></div>
<svg class="a" style="left:58px;top:739px;" width="20" height="20" viewBox="0 0 20 20"><circle cx="12.5" cy="7.5" r="5.6" fill="none" stroke="#000" stroke-width="1.2"/><path d="M8.5 11.5 L2 18" stroke="#000" stroke-width="1.4" stroke-linecap="round"/></svg>
<div class="t" style="left:88.00px;top:741.85px;font-size:14px;color:#000;transform:scaleX(1.0263);">Type here to search</div>
<div class="a" style="left:48px;top:728px;width:288px;height:1px;background:#d0d8d8;"></div>
<div class="a" style="left:48px;top:728px;width:1px;height:40px;background:#d8dede;"></div>
<div class="a" style="left:335px;top:728px;width:1px;height:40px;background:#c0c8c8;"></div>
<svg class="a" style="left:255px;top:731px;" width="81" height="37" viewBox="0 0 81 37"><defs><radialGradient id="hg" cx="0.45" cy="0.25" r="0.8"><stop offset="0" stop-color="#d2bcc0"/><stop offset="0.6" stop-color="#a890a4"/><stop offset="1" stop-color="#6a4a64"/></radialGradient>
<linearGradient id="gg" x1="0" y1="0" x2="0" y2="1"><stop offset="0" stop-color="#8cc020"/><stop offset="1" stop-color="#3a8010"/></linearGradient></defs>
<path d="M4 37 Q9 29.5 26 28.5 H70 Q80 29 81 33 V37 Z" fill="url(#gg)"/>
<g fill="#8a7088"><rect x="22" y="20" width="6" height="12" rx="2"/><rect x="41" y="20" width="5" height="11" rx="2"/><rect x="57" y="20" width="6" height="12" rx="2"/></g>
<g fill="#a48aa0"><rect x="26" y="20" width="6" height="12.5" rx="2"/><rect x="61" y="20" width="6" height="12.5" rx="2"/></g>
<ellipse cx="42" cy="13.5" rx="23" ry="10.2" fill="url(#hg)"/>
<ellipse cx="58.5" cy="14.5" rx="9.5" ry="9.8" fill="url(#hg)"/>
<path d="M15 8 Q21 3.5 29 4.5 L34 9 Q36 17 31 20.5 Q26 24 18 24.5 Q11 25 10.5 22 Q10.5 19 13 15 Z" fill="url(#hg)"/>
<ellipse cx="17" cy="20.5" rx="4.5" ry="3.2" fill="#e8c0b8" opacity="0.7"/>
<circle cx="19" cy="12.2" r="0.9" fill="#333"/><circle cx="11.5" cy="20.5" r="0.6" fill="#333"/></svg>
<svg class="a" style="left:351px;top:740px;" width="18" height="17" viewBox="0 0 18 17"><path d="M1 1.5 H12 M1 15.5 H12 M2.5 4.5 H10.5 V12.5 H2.5 Z" fill="none" stroke="#000" stroke-width="1.3"/><rect x="14" y="4" width="2.5" height="2.5" fill="#000"/><path d="M15.2 8 V16" stroke="#000" stroke-width="1.3"/></svg>
<svg class="a" style="left:398px;top:735px;" width="26" height="26" viewBox="0 0 26 26"><defs><linearGradient id="eg1" x1="0" y1="0" x2="1" y2="1"><stop offset="0" stop-color="#3bd16f"/><stop offset="0.5" stop-color="#1ea0e0"/><stop offset="1" stop-color="#0c59a4"/></linearGradient></defs>
<circle cx="13" cy="13" r="12" fill="url(#eg1)"/><path d="M5 16 Q4 8 12 6.5 Q20 6 21 12 Q21 16 16.5 16 Q12 16 12.5 13 Q8 13 9 18 Q10 22 16 22.5 Q8 24 5 16 Z" fill="#c7e6e8"/><path d="M10 18 Q9 14 13 13.5" fill="none" stroke="#0c59a4" stroke-width="2"/></svg>
<svg class="a" style="left:448px;top:737px;" width="24" height="22" viewBox="0 0 24 22"><path d="M1 3 Q1 1.5 2.5 1.5 H9 L11 3.5 H21.5 Q23 3.5 23 5 V19 Q23 20.5 21.5 20.5 H2.5 Q1 20.5 1 19 Z" fill="#f0c040"/><path d="M1 7 H23 V19 Q23 20.5 21.5 20.5 H2.5 Q1 20.5 1 19 Z" fill="#ffd95a"/><path d="M7.5 21.5 V15 H16.5 V21.5 H14 V17.5 H10 V21.5 Z" fill="#1a6fd0"/><rect x="7" y="13" width="10" height="2.3" fill="#2b8ae8"/></svg>
<svg class="a" style="left:497px;top:736px;" width="25" height="24" viewBox="0 0 25 24"><path d="M0.5 9 L12.5 1 L24.5 9 V22.5 H0.5 Z" fill="#0f6cbd"/><rect x="3.5" y="5.5" width="18" height="9" fill="#fff"/><path d="M0.5 9 L12.5 17 L24.5 9 V22.5 H0.5 Z" fill="#28a8ea"/><path d="M0.5 22.5 L12.5 13.5 L24.5 22.5 Z" fill="#50c8f5"/></svg>
<svg class="a" style="left:545px;top:735px;" width="25" height="26" viewBox="0 0 25 26"><path d="M7 6 V3.5 Q7 1.5 9 1.5 H16 Q18 1.5 18 3.5 V6" fill="none" stroke="#28a8ea" stroke-width="1.8"/><path d="M1 6 H24 V22 Q24 24.5 21.5 24.5 H3.5 Q1 24.5 1 22 Z" fill="#1e5ea8"/><rect x="8" y="10" width="4.2" height="4.2" fill="#f25022"/><rect x="12.8" y="10" width="4.2" height="4.2" fill="#7fba00"/><rect x="8" y="14.8" width="4.2" height="4.2" fill="#00a4ef"/><rect x="12.8" y="14.8" width="4.2" height="4.2" fill="#ffb900"/></svg>
<div class="a" style="left:583px;top:728px;width:48px;height:40px;background:#dff0f1;"></div>
<div class="a" style="left:583px;top:765px;width:48px;height:3px;background:#0078d4;"></div>
<svg class="a" style="left:595px;top:736px;" width="24" height="24" viewBox="0 0 24 24"><defs><linearGradient id="lg2" x1="0" y1="0" x2="1" y2="1"><stop offset="0" stop-color="#2a1414"/><stop offset="0.45" stop-color="#8a1420"/><stop offset="1" stop-color="#ff1a1a"/></linearGradient></defs>
<rect x="0" y="0" width="24" height="24" rx="2.2" fill="url(#lg2)"/>
<path d="M0 8.5 Q8 0.5 18 8.8 L18.8 9.8 L16.2 9.6 Q9 3.5 0 10.2 Z" fill="#fff"/>
<path d="M10 24 L8.5 20.5 Q6 21.5 4.5 20.5 L2.2 17.2 Q3 15.8 5.5 15.2 L8.5 12 Q10 10.2 12.5 10.5 Q16 10.8 17.6 14.5 Q18.5 17.5 18.2 24 Z" fill="#fff"/>
<path d="M3.5 17.5 L9 17 M5 19.5 L9.5 18.5" stroke="#a01020" stroke-width="0.9"/><circle cx="10.8" cy="13.6" r="0.8" fill="#a01020"/></svg>
<div class="a" style="left:636px;top:765px;width:40px;height:3px;background:#0078d4;"></div>
<svg class="a" style="left:644px;top:736px;" width="24" height="24" viewBox="0 0 24 24"><circle cx="12" cy="12" r="11.5" fill="#db4437"/>
<path d="M12 12 L22 6.2 A11.5 11.5 0 0 1 12 23.5 Z" fill="#ffcd40"/><path d="M12 12 L12 23.5 A11.5 11.5 0 0 1 2 6.2 Z" fill="#0f9d58"/>
<path d="M2 6.2 A11.5 11.5 0 0 1 22 6.2 L12 6.2 Z" fill="#db4437"/>
<path d="M12 6.5 H22 L17 15 Z" fill="#ffcd40"/><path d="M17 15 L12 23.5 L7 15 Z" fill="#ffcd40" opacity="0"/>
<circle cx="12" cy="12" r="5.3" fill="#fff"/><circle cx="12" cy="12" r="4.2" fill="#1a73e8"/></svg>
<svg class="a" style="left:1002px;top:735px;" width="30" height="22" viewBox="0 0 30 22"><path d="M1 11.5 H21 M1 16.3 H23" stroke="#8ba7c7" stroke-width="2.2" stroke-linecap="round"/><circle cx="21" cy="18" r="2.5" fill="#8ba7c7"/><circle cx="19" cy="6.8" r="6.2" fill="#d42a20"/><path d="M18.2 4.5 L19.8 3.2 V10" fill="none" stroke="#fff" stroke-width="1.3"/></svg>
<div class="t" style="left:1035.30px;top:740.95px;font-size:14px;color:#000;transform:scaleX(0.8744);">70°F</div>
<div class="t" style="left:1071.60px;top:740.95px;font-size:14px;color:#000;transform:scaleX(0.9947);">Windy</div>
<svg class="a" style="left:1133px;top:743px;" width="16" height="10" viewBox="0 0 16 10"><path d="M1.5 8.5 L8 2 L14.5 8.5" fill="none" stroke="#000" stroke-width="1.4"/></svg>
<svg class="a" style="left:1158px;top:739px;" width="15" height="18" viewBox="0 0 15 18"><rect x="2" y="5" width="8" height="8" rx="1.5" fill="none" stroke="#000" stroke-width="1.2"/><path d="M10 8 L13 6 V12 L10 10" fill="none" stroke="#000" stroke-width="1.1"/><path d="M3 2.5 Q6.5 0.5 10 2.5 M3 15.5 Q6.5 17.5 10 15.5" fill="none" stroke="#000" stroke-width="1"/></svg>
<svg class="a" style="left:1180px;top:741px;" width="18" height="12" viewBox="0 0 18 12"><rect x="5" y="3" width="11" height="7" fill="none" stroke="#000" stroke-width="1.2"/><rect x="7" y="5" width="7.5" height="3.5" fill="#000"/><rect x="16.3" y="5" width="1.2" height="3" fill="#000"/><path d="M0.5 6 H4 M1.5 2 V5 M3.5 2 V5" stroke="#000" stroke-width="1.2"/><path d="M0.8 4.5 H4.2 V7 Q2.5 9 0.8 7 Z" fill="#000"/></svg>
<svg class="a" style="left:1204px;top:741px;" width="18" height="16" viewBox="0 0 18 16"><path d="M3 12 Q0.5 12 0.5 9 Q0.5 6.5 3 6 Q3.5 2 8 2 Q12 2 13 5.5 Q16 6 16 9 Q16 12 13 12 Z" fill="#555" stroke="#888" stroke-width="0.6"/><circle cx="12.5" cy="10.5" r="4.5" fill="#0f6cbd" stroke="#c7e6e8" stroke-width="1"/><path d="M12.5 9 V13" stroke="#fff" stroke-width="1.4"/><circle cx="12.5" cy="7.6" r="0.8" fill="#fff"/></svg>
<svg class="a" style="left:1231px;top:741px;" width="15" height="14" viewBox="0 0 15 14"><path d="M1 12 Q1.5 3 13 1.5 M3.5 12.5 Q4 6 12.5 4.5 M6.5 12.5 Q7 8.5 12 7.8" fill="none" stroke="#000" stroke-width="1.2"/><circle cx="11.5" cy="11.5" r="1.6" fill="#000"/></svg>
<div class="t" style="left:1257.80px;top:733.04px;font-size:12px;color:#000;transform:scaleX(0.9148);">12:43 PM</div>
<div class="t" style="left:1257.80px;top:749.74px;font-size:12px;color:#000;transform:scaleX(0.9846);">4/3/2024</div>
<svg class="a" style="left:1322px;top:738px;" width="28" height="26" viewBox="0 0 28 26"><path d="M3 2 H19 V13.5 H9 L6 16.5 V13.5 H3 Z" fill="#000"/><path d="M6 5.5 H16 M6 8 H16 M6 10.5 H13" stroke="#c7e6e8" stroke-width="1"/><circle cx="18.3" cy="16.7" r="7.3" fill="#d2dcdc" stroke="#555" stroke-width="1"/></svg>
<div class="t" style="left:1336.50px;top:750.34px;font-size:12px;color:#000;transform:scaleX(1.0019);">9</div>
<div class="a" style="left:1361px;top:728px;width:1px;height:40px;background:#9fb8ba;"></div>
</body></html>
